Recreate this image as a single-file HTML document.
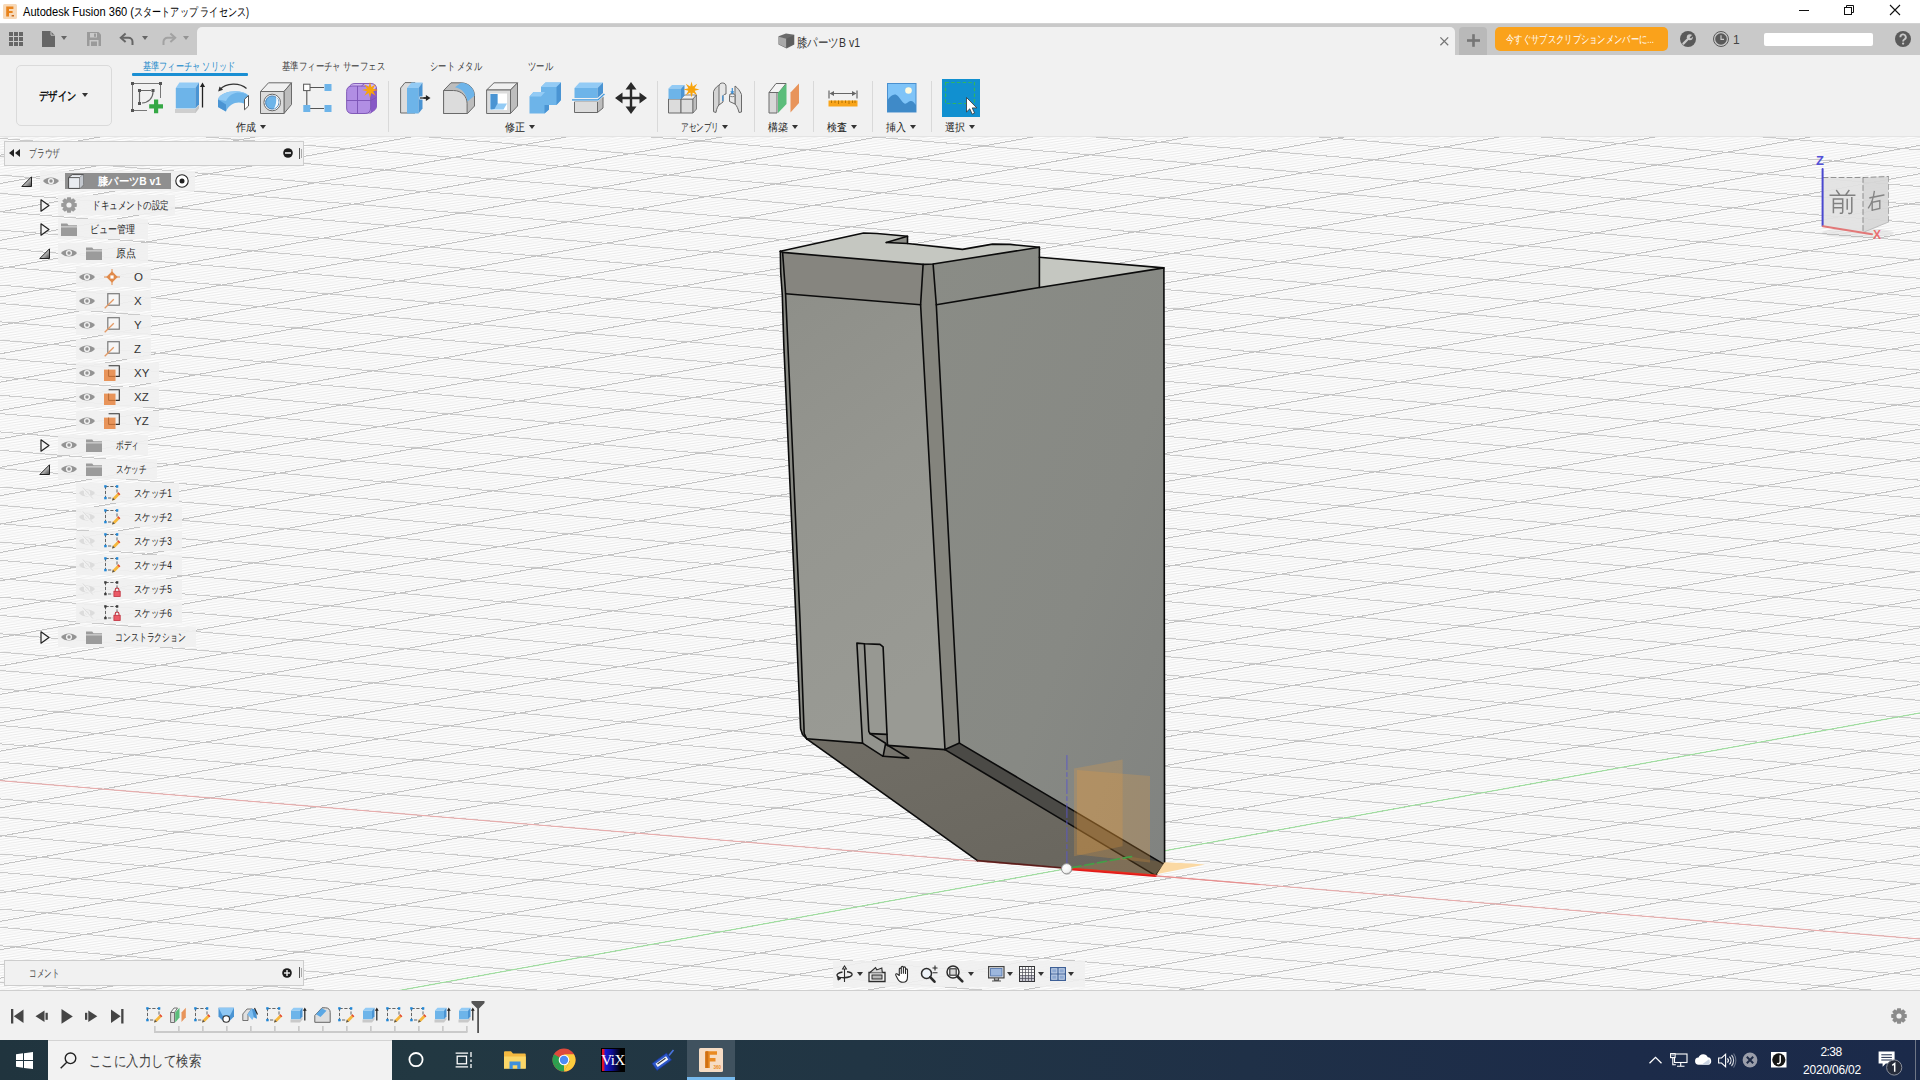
<!DOCTYPE html>
<html lang="ja"><head><meta charset="utf-8"><title>Autodesk Fusion 360</title>
<style>
*{box-sizing:border-box}
html,body{margin:0;padding:0}
body{width:1920px;height:1080px;overflow:hidden;position:relative;background:#fff;
 font-family:"Liberation Sans",sans-serif;font-size:12px;color:#333}
.a{position:absolute;white-space:nowrap}
.t{position:absolute;white-space:nowrap;line-height:1}
svg{position:absolute;overflow:visible}
#title{left:0;top:0;width:1920px;height:23px;background:#fff}
#qat{left:0;top:23px;width:1920px;height:32px;background:#c9c9c9;border-top:1px solid #d2d2d2}
#doctab{left:197px;top:27px;width:1258px;height:28px;background:#f1f1f1;border-radius:5px 5px 0 0}
#plus{left:1459px;top:27px;width:28px;height:28px;background:#b9b9b9;border-radius:4px 4px 0 0}
#sub{left:1495px;top:27px;width:173px;height:24px;background:#faa21b;border-radius:5px;color:#fff;
 font-size:12px;line-height:24px;padding-left:11px;overflow:hidden}
#ribbon{left:0;top:55px;width:1920px;height:82px;background:#f1f1f1;border-bottom:1px solid #e4e4e4}
#canvas{left:0;top:137px;width:1920px;height:854px;background:#fff;overflow:hidden}
#timeline{left:0;top:990px;width:1920px;height:50px;background:#f1f1f1;border-top:1px solid #cfcfcf}
#taskbar{left:0;top:1040px;width:1920px;height:40px;
 background:linear-gradient(90deg,#20343e 0%,#223842 22%,#213544 45%,#1f3047 65%,#1c2b49 85%,#1b2a4a 100%)}
.sep{position:absolute;top:81px;width:1px;height:51px;background:#d9d9d9}
.tab{position:absolute;top:60px;font-size:11px;line-height:12px;color:#3a3a3a;white-space:nowrap;letter-spacing:.4px}
.grp{position:absolute;top:121px;font-size:11px;line-height:12px;color:#222;white-space:nowrap}
.dd{position:absolute;width:0;height:0;border-left:3.5px solid transparent;border-right:3.5px solid transparent;border-top:4.5px solid #333}
.row{position:absolute;height:20px;background:rgba(240,240,240,.92)}
.lbl{position:absolute;font-size:11px;line-height:20px;color:#222;white-space:nowrap;letter-spacing:.3px}
</style></head>
<body>
<div id="title" class="a">
<svg style="left:3px;top:4px" width="14" height="15" viewBox="0 0 14 15"><rect x="0" y="0" width="14" height="15" rx="1.5" fill="#f7d9b8"/><path d="M3.2 12.5V2.6h7.2v2.3H6v2h3.6v2.2H6v3.4z" fill="#e8831c"/><path d="M8.6 11h2.4v1.5H8.6z" fill="#c9681a"/></svg>
<svg style="left:23px;top:3px" width="230" height="17"><text x="0" y="12.9" font-size="12" fill="#000"><tspan textLength="111" lengthAdjust="spacingAndGlyphs">Autodesk Fusion 360 (</tspan><tspan textLength="115" lengthAdjust="spacingAndGlyphs">スタートアップ ライセンス)</tspan></text></svg>
<svg style="left:1799px;top:10px" width="10" height="1"><rect width="10" height="1" y="0" fill="#111"/></svg>
<svg style="left:1844px;top:5px" width="10" height="10" viewBox="0 0 10 10" fill="none" stroke="#111" stroke-width="1"><rect x="0.5" y="2.5" width="7" height="7"/><path d="M2.5 2.5V0.5h7v7h-2"/></svg>
<svg style="left:1890px;top:5px" width="10" height="10" viewBox="0 0 10 10" stroke="#111" stroke-width="1.1"><path d="M0 0L10 10M10 0L0 10"/></svg>
</div>
<div id="qat" class="a"></div>
<svg style="left:9px;top:32px" width="14" height="14" fill="#666"><rect x="0" y="0" width="4" height="4"/><rect x="5" y="0" width="4" height="4"/><rect x="10" y="0" width="4" height="4"/><rect x="0" y="5" width="4" height="4"/><rect x="5" y="5" width="4" height="4"/><rect x="10" y="5" width="4" height="4"/><rect x="0" y="10" width="4" height="4"/><rect x="5" y="10" width="4" height="4"/><rect x="10" y="10" width="4" height="4"/></svg>
<svg style="left:42px;top:31px" width="13" height="16" fill="#666"><path d="M0 0h8.5L13 4.5V16H0z"/><path d="M9 0.3v3.9h3.8" fill="none" stroke="#c9c9c9" stroke-width="1"/></svg>
<div class="dd" style="left:61px;top:36px;border-top-color:#666"></div>
<svg style="left:87px;top:32px" width="14" height="14"><path d="M0 0h11.5L14 2.5V14H0z" fill="#9a9a9a"/><rect x="3" y="1" width="7" height="4.5" fill="#c9c9c9"/><rect x="7" y="1.6" width="2" height="3.2" fill="#9a9a9a"/><rect x="2.5" y="8" width="9" height="6" fill="#c9c9c9"/><rect x="4" y="9.5" width="6" height="4.5" fill="#9a9a9a"/></svg>
<svg style="left:120px;top:33px" width="14" height="13" viewBox="0 0 14 13" fill="none"><path d="M2.2 4.8h6.3a4 4 0 0 1 4 4V12" stroke="#666" stroke-width="2"/><path d="M5.6 0.6L0.8 4.8l4.8 4.2" stroke="#666" stroke-width="2" stroke-linejoin="miter"/></svg>
<div class="dd" style="left:142px;top:36px;border-top-color:#666"></div>
<svg style="left:162px;top:33px" width="14" height="13" viewBox="0 0 14 13" fill="none"><path d="M11.8 4.8H5.5a4 4 0 0 0-4 4V12" stroke="#a2a2a2" stroke-width="2"/><path d="M8.4 0.6l4.8 4.2-4.8 4.2" stroke="#a2a2a2" stroke-width="2"/></svg>
<div class="dd" style="left:183px;top:36px;border-top-color:#939393"></div>
<div id="doctab" class="a"></div>
<svg style="left:778px;top:33px" width="17" height="16" viewBox="0 0 17 16"><path d="M0.5 3.2L8 0.4l8.3 1.4v9.6L8.6 15.4 0.5 11.5z" fill="#6b6b6b"/><path d="M0.9 3.8l7.4 1.9v9L0.9 11.2z" fill="#a9a9a9"/><path d="M8.3 5.7l7.7-3.4v8.9l-7.7 3.5z" fill="#5e5e5e"/></svg>
<svg style="left:797px;top:32.5px" width="63" height="18"><text x="0" y="13.7" font-size="13" fill="#333" textLength="63" lengthAdjust="spacingAndGlyphs">膝パーツB v1</text></svg>
<svg style="left:1440px;top:37px" width="9" height="9" viewBox="0 0 9 9" stroke="#777" stroke-width="1.3"><path d="M0.4 0.4l7.8 7.8M8.2 0.4L0.4 8.2"/></svg>
<div id="plus" class="a"></div>
<svg style="left:1467px;top:34px" width="13" height="13" fill="#767676"><rect x="5.2" y="0.2" width="2.6" height="12.6"/><rect x="0" y="5.2" width="13" height="2.6"/></svg>
<div id="sub" class="a"></div>
<svg style="left:1506px;top:31.25px" width="148" height="15.5"><text x="0" y="11.5" font-size="10.5" fill="#fff" textLength="148" lengthAdjust="spacingAndGlyphs">今すぐサブスクリプションメンバーに...</text></svg>
<svg style="left:1680px;top:31px" width="16" height="16" viewBox="0 0 16 16"><circle cx="8" cy="8" r="8" fill="#5a5a5a"/><path d="M3.4 12.6l4.3-4.3" stroke="#c9c9c9" stroke-width="2.2" stroke-linecap="round"/><circle cx="9.8" cy="6.2" r="3" fill="#c9c9c9"/><path d="M9.6 6.4l3.2-3.2 1.2 1.2-3 3.2z" fill="#5a5a5a"/></svg>
<svg style="left:1713px;top:31px" width="16" height="16" viewBox="0 0 16 16"><circle cx="8" cy="8" r="7.5" fill="none" stroke="#5a5a5a" stroke-width="1"/><circle cx="8" cy="8" r="5.8" fill="#5a5a5a"/><path d="M8 4.2V8.4h3" stroke="#c9c9c9" stroke-width="1.2" fill="none"/></svg>
<div class="t" style="left:1733px;top:33px;font-size:12px;line-height:14px;color:#444">1</div>
<div class="a" style="left:1764px;top:33px;width:109px;height:13px;background:#fff;border-radius:2px"></div>
<svg style="left:1895px;top:31px" width="16" height="16" viewBox="0 0 16 16"><circle cx="8" cy="8" r="8" fill="#5a5a5a"/><path d="M5.4 6.2a2.7 2.7 0 1 1 3.9 2.3c-.9.5-1.2.9-1.2 1.9" stroke="#c9c9c9" stroke-width="1.9" fill="none"/><circle cx="8.1" cy="12.6" r="1.15" fill="#c9c9c9"/></svg>
<div id="ribbon" class="a"></div>
<div class="a" style="left:16px;top:65px;width:96px;height:61px;border:1px solid #dadada;border-radius:5px;background:#f1f1f1"></div>
<svg style="left:39px;top:86.5px" width="37" height="17"><text x="0" y="12.8" font-size="12" fill="#111" font-weight="bold" textLength="37" lengthAdjust="spacingAndGlyphs">デザイン</text></svg>
<div class="dd" style="left:82px;top:93px"></div>
<svg style="left:143px;top:58px" width="92" height="16"><text x="0" y="12" font-size="11" fill="#1687c9" textLength="92" lengthAdjust="spacingAndGlyphs">基準フィーチャ ソリッド</text></svg>
<div class="a" style="left:132px;top:73px;width:116px;height:3px;background:#1a8fd3;border-radius:1px"></div>
<svg style="left:281.5px;top:58px" width="103" height="16"><text x="0" y="12" font-size="11" fill="#3a3a3a" textLength="103" lengthAdjust="spacingAndGlyphs">基準フィーチャ サーフェス</text></svg>
<svg style="left:430px;top:58px" width="52" height="16"><text x="0" y="12" font-size="11" fill="#3a3a3a" textLength="52" lengthAdjust="spacingAndGlyphs">シート メタル</text></svg>
<svg style="left:527.5px;top:58px" width="25" height="16"><text x="0" y="12" font-size="11" fill="#3a3a3a" textLength="25" lengthAdjust="spacingAndGlyphs">ツール</text></svg>
<svg style="left:131px;top:82px" width="32" height="32" viewBox="0 0 32 32"><path d="M1.5 1.5h28v27h-28z" fill="none" stroke="#777" stroke-width="1"/><g fill="#555"><rect x="0" y="0" width="3" height="3"/><rect x="28" y="0" width="3" height="3"/><rect x="0" y="27" width="3" height="3"/></g><rect x="16" y="16" width="16" height="16" fill="#f1f1f1"/><path d="M10 8.5h10M8.5 10v10" stroke="#666" stroke-width="1.2" fill="none"/><path d="M22 10c0 6-4.5 10.5-11 11" stroke="#666" stroke-width="1.2" fill="none"/><g fill="#555"><rect x="7" y="7" width="3" height="3"/><rect x="20.5" y="7" width="3" height="3"/><rect x="7" y="20" width="3" height="3"/></g><path d="M23 17.5h4.2v13.8H23z M18.2 22.3H32v4.2H18.2z" fill="#35a845"/></svg>
<svg style="left:174px;top:82px" width="32" height="32" viewBox="0 0 32 32"><path d="M1 27h20.5l3.5-4.2v3.6L21.5 31H1z" fill="#c4c4c4"/><path d="M1 27h20.5v4H1z" fill="#cfcfcf"/><path d="M1.8 6h19.6v20.4H1.8z" fill="#6db4e9"/><path d="M1.8 6L5.4 0.6H25L21.4 6z" fill="#93cbf5"/><path d="M21.4 6L25 0.6v21.6l-3.6 4.2z" fill="#4a94d3"/><path d="M28.5 3v22.5" stroke="#222" stroke-width="1.3"/><path d="M28.5 0.5l2.6 4.6h-5.2z" fill="#222"/></svg>
<svg style="left:217px;top:82px" width="32" height="32" viewBox="0 0 32 32"><path d="M1 17.5C3 9 24 6 31.5 13.5V24c-7-5.5-18-5-22.5 5.5L1 25z" fill="#6db4e9"/><path d="M1 17.5C3 9 24 6 31.5 13.5c-7-5-18-4-22.5 5.5z" fill="#93cbf5"/><path d="M1 17.5l8 5V29.5L1 25z" fill="#4a94d3"/><path d="M27.5 17.2l4-3.7V24l-4 3.8z" fill="#fff" stroke="#555" stroke-width="1"/><path d="M3 7.5C9 0.5 23 0.5 29.5 6.5" stroke="#333" stroke-width="1.2" fill="none"/><path d="M1.2 9.5l1.3-5 3.6 3.2z" fill="#333"/></svg>
<svg style="left:260px;top:82px" width="32" height="32" viewBox="0 0 32 32"><path d="M0.5 9.5L8.5 0.8H31.5L24 9.5z" fill="#f0f0f0" stroke="#6a6a6a" stroke-width="1"/><path d="M24 9.5l7.5-8.7V22.5L24 31.5z" fill="#bdbdbd" stroke="#6a6a6a" stroke-width="1"/><path d="M0.5 9.5H24V31.5H0.5z" fill="#dcdcdc" stroke="#6a6a6a" stroke-width="1"/><circle cx="12.2" cy="20.5" r="8.3" fill="#fff" stroke="#666" stroke-width="1"/><circle cx="12.2" cy="20.5" r="6.6" fill="#6db4e9" stroke="#4a80b4" stroke-width="1"/><path d="M16 14.8c4 3.2 3.5 9.7-2.3 12.2 2.3-3.3 3-7.7 2.3-12.2z" fill="#f7fafd"/></svg>
<svg style="left:303px;top:82px" width="32" height="32" viewBox="0 0 32 32"><path d="M7 5.5h14M3.8 9v14M7 26.5h14" stroke="#555" stroke-width="1.1" fill="none"/><rect x="0.6" y="2.2" width="6.4" height="6.4" fill="#fff" stroke="#555" stroke-width="1"/><rect x="21.5" y="2" width="7" height="7" fill="#6db4e9"/><rect x="0.3" y="23" width="7" height="7" fill="#6db4e9"/><rect x="21.5" y="23" width="7" height="7" fill="#6db4e9"/></svg>
<svg style="left:346px;top:82px" width="32" height="32" viewBox="0 0 32 32"><path d="M3 5.5C4 2.8 6 1.5 9 1.5H25c3 0 5 1.5 5.5 4.5V24c0 2-1 3.5-2.5 4.5L24.5 31H5.5l-2.5-5z" fill="#d2bbf2" stroke="#7b52b3" stroke-width="0.9"/><path d="M24.5 9.5c2.5-1.5 4.5-3 6-3.5V24c0 2-1 3.5-2.5 4.5l-3.5 2.5z" fill="#8758c6"/><path d="M0.6 9.5c0-3.5 2-5.5 5.5-5.5h13c3.5 0 5.5 2 5.5 5.5V26c0 3.5-2 5.5-5.5 5.5H6.1c-3.5 0-5.5-2-5.5-5.5z" fill="#b18ee4" stroke="#7b52b3" stroke-width="0.9"/><path d="M11.5 4V31.5M0.6 18.5h24M24.6 18.5l5.9-3M18.5 1.5l-3 2.5" stroke="#7b52b3" stroke-width="0.9" fill="none"/><polygon points="24,0 25.3,4.9 29.7,2.3 27.1,6.7 32,8 27.1,9.3 29.7,13.7 25.3,11.1 24,16 22.7,11.1 18.3,13.7 20.9,9.3 16,8 20.9,6.7 18.3,2.3 22.7,4.9" fill="#f7a30c"/></svg>
<svg style="left:400px;top:82px" width="32" height="32" viewBox="0 0 32 32"><path d="M0.6 6L5 0.6h10V31H0.6z" fill="#dcdcdc" stroke="#6a6a6a" stroke-width="1"/><path d="M7 6L11.5 0.6h11L18.5 6z" fill="#93cbf5"/><path d="M7 6h11.5v25.5H7z" fill="#6db4e9"/><path d="M18.5 6l4-5.4v25.9l-4 5z" fill="#4a94d3"/><path d="M20 16h7" stroke="#222" stroke-width="1.5"/><path d="M30.5 16l-4.6 3v-6z" fill="#222"/><rect x="19.5" y="14.5" width="4" height="3" fill="#fff"/><path d="M20 16h7" stroke="#222" stroke-width="1.3"/></svg>
<svg style="left:443px;top:82px" width="32" height="32" viewBox="0 0 32 32"><path d="M0.6 8.5L8 0.8h10c8 0 13.5 6 13.5 13V24l-7 7.5H0.6z" fill="#bdbdbd" stroke="#6a6a6a" stroke-width="1"/><path d="M0.6 8.5h10c8 0 13.5 6 13.5 13v10H0.6z" fill="#dcdcdc" stroke="#6a6a6a" stroke-width="1"/><path d="M12 5.2L18 0.8c8 0 13.5 6 13.5 13l-7 5.7c-1-7.5-5.5-13-12.5-14.3z" fill="#6db4e9"/></svg>
<svg style="left:486px;top:82px" width="32" height="32" viewBox="0 0 32 32"><path d="M0.6 8L8 0.8H31.5L24.5 8z" fill="#f0f0f0" stroke="#6a6a6a" stroke-width="1"/><path d="M24.5 8l7-7.2V24l-7 7.5z" fill="#bdbdbd" stroke="#6a6a6a" stroke-width="1"/><path d="M0.6 8H24.5V31.5H0.6z" fill="#dcdcdc" stroke="#6a6a6a" stroke-width="1"/><path d="M4 11.5H21V28H4z" fill="#fff"/><path d="M4.5 12h7v9.5h9.5l-3.5 6H4.5z" fill="#93cbf5"/><path d="M4.5 12h7v9.5l-3 5.5-4 0.5z" fill="#4a94d3"/></svg>
<svg style="left:529px;top:82px" width="32" height="32" viewBox="0 0 32 32"><path d="M0.5 14.5L4.5 10H12V5L16.5 0.5H32v17.5L27.5 23H20v4.5l-4.5 4H0.5z" fill="#6db4e9"/><path d="M0.5 14.5L4.5 10H16l-4 4.5z M12 5L16.5 0.5H32L27.5 5z" fill="#93cbf5"/><path d="M27.5 5L32 0.5v17.5L27.5 23z M15.5 23h4.5v4.5l-4.5 4z" fill="#4a94d3"/></svg>
<svg style="left:572px;top:82px" width="32" height="32" viewBox="0 0 32 32"><path d="M2.5 19.5h23v11h-23z" fill="#dcdcdc" stroke="#6a6a6a" stroke-width="1"/><path d="M25.5 19.5l5.5-5V26l-5.5 4.5z" fill="#bdbdbd" stroke="#6a6a6a" stroke-width="1"/><path d="M2.5 6L7.5 0.6H31L25.5 6z" fill="#93cbf5"/><path d="M2.5 6h23v10h-23z" fill="#6db4e9"/><path d="M25.5 6L31 0.6V11l-5.5 5z" fill="#4a94d3"/><path d="M0 18h26l6.5-6" stroke="#3f97dc" stroke-width="1.6" fill="none"/><path d="M0 19.2h26l6.5-6" stroke="#fff" stroke-width="0.8" fill="none"/></svg>
<svg style="left:615px;top:82px" width="32" height="32" viewBox="0 0 32 32"><path d="M16 3v26M3 16h26" stroke="#2a2a2a" stroke-width="2.4"/><path d="M16 0l5.5 7.5h-11z M16 32l5.5-7.5h-11z M0 16l7.5-5.5v11z M32 16l-7.5-5.5v11z" fill="#2a2a2a"/></svg>
<svg style="left:668px;top:82px" width="32" height="32" viewBox="0 0 32 32"><path d="M0.5 17h12.5v14H0.5z" fill="#dcdcdc" stroke="#6a6a6a" stroke-width="1"/><path d="M13 17h12v14H13z" fill="#dcdcdc" stroke="#6a6a6a" stroke-width="1"/><path d="M13 17l3.5-4H28.5L25 17z" fill="#f0f0f0" stroke="#6a6a6a" stroke-width="0.8"/><path d="M25 17l3.5-4V27L25 31z" fill="#bdbdbd" stroke="#6a6a6a" stroke-width="0.8"/><path d="M0.5 6.5L4 3H16.5L13 6.5z" fill="#93cbf5"/><path d="M0.5 6.5H13V17H0.5z" fill="#6db4e9"/><path d="M13 6.5L16.5 3v10.5L13 17z" fill="#4a94d3"/><polygon points="23.5,-0.5 24.8,4.4 29.2,1.8 26.6,6.2 31.5,7.5 26.6,8.8 29.2,13.2 24.8,10.6 23.5,15.5 22.2,10.6 17.8,13.2 20.4,8.8 15.5,7.5 20.4,6.2 17.8,1.8 22.2,4.4" fill="#f7a30c"/></svg>
<svg style="left:712px;top:82px" width="32" height="32" viewBox="0 0 32 32"><path d="M1.5 9.5C3 6 5.5 3.5 8.5 2.5V21c-2.5 2.5-4 5.5-4.5 9.5l-2.5-0.8z" fill="#d4d4d4" stroke="#6a6a6a" stroke-width="1"/><path d="M7 4.2C7 2.2 8.5 1 10.5 1S14 2.2 14 4.2V12c-1.8 0.3-3 1-3 2.5V20L7 23z" fill="#e6e6e6" stroke="#6a6a6a" stroke-width="1"/><path d="M23 4c3 2 5 5 6.5 8.5V30l-2.5 0.5c-0.8-3.5-2-6.5-4-8.5z" fill="#dadada" stroke="#6a6a6a" stroke-width="1"/><path d="M17.5 13.5c0-1.3 1.2-2 2.8-2s2.7 0.7 2.7 2V22l-5.5-2.5z" fill="#e8e8e8" stroke="#6a6a6a" stroke-width="1"/><ellipse cx="20.3" cy="13.3" rx="2.6" ry="1.4" fill="#f4f4f4" stroke="#6a6a6a" stroke-width="0.8"/><path d="M10.8 13.5v5.5M20.3 6v5" stroke="#3f8fd4" stroke-width="1.2"/><path d="M20.3 12.5l-2-3.2h4z" fill="#3f8fd4"/></svg>
<svg style="left:768px;top:82px" width="32" height="32" viewBox="0 0 32 32"><path d="M1 10.5L8 1.5h10L11 10.5z" fill="#f4f4f4" stroke="#6a6a6a" stroke-width="1"/><path d="M1 10.5h8v20.5H1z" fill="#d8d8d8" stroke="#6a6a6a" stroke-width="1"/><path d="M10 10.5L18.5 1.5V22L10 31z" fill="#5bbd7b"/><path d="M22.5 10.5L31 1.5V21L22.5 30.5z" fill="#e8945a"/></svg>
<svg style="left:827px;top:82px" width="32" height="32" viewBox="0 0 32 32"><path d="M2 8.5v8M30 8.5v8M4 11.5h24" stroke="#666" stroke-width="1.2" fill="none"/><path d="M2.5 11.5l4.5-2.5v5z M29.5 11.5l-4.5-2.5v5z" fill="#666"/><rect x="1.5" y="18.5" width="29" height="6" fill="#f9a51a"/><path d="M4.5 18.5v2.5M8 18.5v2.5M11.5 18.5v3.5M15 18.5v2.5M18.5 18.5v2.5M22 18.5v3.5M25.5 18.5v2.5M28 18.5v2.5" stroke="#b06f00" stroke-width="0.9"/></svg>
<svg style="left:886px;top:82px" width="32" height="32" viewBox="0 0 32 32"><rect x="1.5" y="1.5" width="28.5" height="28.5" fill="#7fc4f8" stroke="#4a90cf" stroke-width="1"/><path d="M1.5 18c3-4 6-6.5 9-5 3 1.5 5 7 8 8.5 2 1 3.5-2 6-2.5 2-0.4 4 2 5.5 4V30H1.5z" fill="#3f8ac8"/><circle cx="22.5" cy="8.5" r="3.3" fill="#fffbe0"/></svg>
<svg style="left:942px;top:79px" width="38" height="38" viewBox="0 0 38 38"><rect width="38" height="38" fill="#1190d0"/><path d="M3.5 3.5h29v21h-29z" fill="none" stroke="#2fb463" stroke-width="1.2" stroke-dasharray="3.5 2.2"/><path d="M24.5 18.5v14.5l3.3-3.2 2.4 5.4 2.4-1.1-2.4-5.2h4.6z" fill="#fff" stroke="#333" stroke-width="0.8"/></svg>
<div class="sep" style="left:388px"></div>
<div class="sep" style="left:657px"></div>
<div class="sep" style="left:754px"></div>
<div class="sep" style="left:813px"></div>
<div class="sep" style="left:872px"></div>
<div class="sep" style="left:931px"></div>
<svg style="left:236px;top:119px" width="20" height="16"><text x="0" y="12" font-size="11" fill="#222" textLength="20" lengthAdjust="spacingAndGlyphs">作成</text></svg>
<div class="dd" style="left:260px;top:125px"></div>
<svg style="left:505px;top:119px" width="20" height="16"><text x="0" y="12" font-size="11" fill="#222" textLength="20" lengthAdjust="spacingAndGlyphs">修正</text></svg>
<div class="dd" style="left:529px;top:125px"></div>
<svg style="left:680.5px;top:119px" width="38" height="16"><text x="0" y="12" font-size="11" fill="#222" textLength="38" lengthAdjust="spacingAndGlyphs">アセンブリ</text></svg>
<div class="dd" style="left:722px;top:125px"></div>
<svg style="left:768px;top:119px" width="20" height="16"><text x="0" y="12" font-size="11" fill="#222" textLength="20" lengthAdjust="spacingAndGlyphs">構築</text></svg>
<div class="dd" style="left:792px;top:125px"></div>
<svg style="left:826.5px;top:119px" width="20" height="16"><text x="0" y="12" font-size="11" fill="#222" textLength="20" lengthAdjust="spacingAndGlyphs">検査</text></svg>
<div class="dd" style="left:851px;top:125px"></div>
<svg style="left:885.5px;top:119px" width="20" height="16"><text x="0" y="12" font-size="11" fill="#222" textLength="20" lengthAdjust="spacingAndGlyphs">挿入</text></svg>
<div class="dd" style="left:910px;top:125px"></div>
<svg style="left:944.5px;top:119px" width="20" height="16"><text x="0" y="12" font-size="11" fill="#222" textLength="20" lengthAdjust="spacingAndGlyphs">選択</text></svg>
<div class="dd" style="left:969px;top:125px"></div>
<div id="canvas" class="a"><svg style="left:0;top:0" width="1920" height="854" viewBox="0 0 1920 854">
<defs>
<pattern id="gA" width="40" height="28.38" patternUnits="userSpaceOnUse" patternTransform="skewY(-10.3427) translate(0 18.168)"><rect x="0" y="-0.5" width="40" height="1" fill="#c6c6c6"/><rect x="0" y="27.88" width="40" height="1" fill="#c6c6c6"/></pattern>
<pattern id="gB" width="40" height="18.35" patternUnits="userSpaceOnUse" patternTransform="skewY(4.7162) translate(0 1.322)"><rect x="0" y="-0.5" width="40" height="1" fill="#cccccc"/><rect x="0" y="17.85" width="40" height="1" fill="#cccccc"/></pattern>
<pattern id="mA" width="40" height="2.838" patternUnits="userSpaceOnUse" patternTransform="skewY(-10.3427) translate(0 1.14)"><rect x="0" y="0" width="40" height="0.9" fill="#000" fill-opacity="0.05"/></pattern>
<pattern id="mB" width="40" height="1.835" patternUnits="userSpaceOnUse" patternTransform="skewY(4.7162) translate(0 1.322)"><rect x="0" y="0" width="40" height="0.7" fill="#000" fill-opacity="0.045"/></pattern>
<linearGradient id="fL" x1="0" y1="0" x2="0.25" y2="1"><stop offset="0" stop-color="#8e8f89"/><stop offset="0.5" stop-color="#959690"/><stop offset="1" stop-color="#999a94"/></linearGradient>
<linearGradient id="fR" x1="0" y1="0" x2="1" y2="1"><stop offset="0" stop-color="#8a8c86"/><stop offset="0.6" stop-color="#878984"/><stop offset="1" stop-color="#818380"/></linearGradient>
<linearGradient id="fB" x1="0" y1="0" x2="1" y2="1"><stop offset="0" stop-color="#716e66"/><stop offset="1" stop-color="#68655d"/></linearGradient>
<radialGradient id="ball" cx="0.4" cy="0.35" r="0.7"><stop offset="0" stop-color="#fff"/><stop offset="0.7" stop-color="#f2f2f2"/><stop offset="1" stop-color="#b0b0b0"/></radialGradient>
</defs>
<rect width="1920" height="854" fill="url(#mA)"/><rect width="1920" height="854" fill="url(#mB)"/>
<g shape-rendering="crispEdges" stroke-width="1" fill="none"><path d="M0 -145.48L1920 12.92M0 -127.13L1920 31.27M0 -108.78L1920 49.62M0 -90.43L1920 67.97M0 -72.08L1920 86.32M0 -53.73L1920 104.67M0 -35.38L1920 123.02M0 -17.03L1920 141.37M0 1.32L1920 159.72M0 19.67L1920 178.07M0 38.02L1920 196.42M0 56.37L1920 214.77M0 74.72L1920 233.12M0 93.07L1920 251.47M0 111.42L1920 269.82M0 129.77L1920 288.17M0 148.12L1920 306.52M0 166.47L1920 324.87M0 184.82L1920 343.22M0 203.17L1920 361.57M0 221.52L1920 379.92M0 239.87L1920 398.27M0 258.22L1920 416.62M0 276.57L1920 434.97M0 294.92L1920 453.32M0 313.27L1920 471.67M0 331.62L1920 490.02M0 349.97L1920 508.37M0 368.32L1920 526.72M0 386.67L1920 545.07M0 405.02L1920 563.42M0 423.37L1920 581.77M0 441.72L1920 600.12M0 460.07L1920 618.47M0 478.42L1920 636.82M0 496.77L1920 655.17M0 515.12L1920 673.52M0 533.47L1920 691.87M0 551.82L1920 710.22M0 570.17L1920 728.57M0 588.52L1920 746.92M0 606.87L1920 765.27M0 625.22L1920 783.62M0 643.57L1920 801.97M0 661.92L1920 820.32M0 680.27L1920 838.67M0 698.62L1920 857.02M0 716.97L1920 875.37M0 735.32L1920 893.72M0 753.67L1920 912.07M0 772.02L1920 930.42M0 790.37L1920 948.77M0 808.72L1920 967.12M0 827.07L1920 985.47M0 845.42L1920 1003.82" stroke="#cacaca"/><path d="M0 18.17L1920 -332.23M0 46.55L1920 -303.85M0 74.93L1920 -275.47M0 103.31L1920 -247.09M0 131.69L1920 -218.71M0 160.07L1920 -190.33M0 188.45L1920 -161.95M0 216.83L1920 -133.57M0 245.21L1920 -105.19M0 273.59L1920 -76.81M0 301.97L1920 -48.43M0 330.35L1920 -20.05M0 358.73L1920 8.33M0 387.11L1920 36.71M0 415.49L1920 65.09M0 443.87L1920 93.47M0 472.25L1920 121.85M0 500.63L1920 150.23M0 529.01L1920 178.61M0 557.39L1920 206.99M0 585.77L1920 235.37M0 614.15L1920 263.75M0 642.53L1920 292.13M0 670.91L1920 320.51M0 699.29L1920 348.89M0 727.67L1920 377.27M0 756.05L1920 405.65M0 784.43L1920 434.03M0 812.81L1920 462.41M0 841.19L1920 490.79M0 869.57L1920 519.17M0 897.95L1920 547.55M0 926.33L1920 575.93M0 954.71L1920 604.31M0 983.09L1920 632.69M0 1011.47L1920 661.07M0 1039.85L1920 689.45M0 1068.23L1920 717.83M0 1096.61L1920 746.21M0 1124.99L1920 774.59M0 1153.37L1920 802.97M0 1181.75L1920 831.35" stroke="#c3c3c3"/></g>
<polyline points="0,643.6 1920,802" fill="none" stroke="#ecaaaa" stroke-width="1" stroke-linejoin="round" stroke-linecap="round"/>
<polyline points="0,926.3 1920,575.9" fill="none" stroke="#9be49b" stroke-width="1" stroke-linejoin="round" stroke-linecap="round"/>
<polygon points="780.3,114.3 780.7,135.5 782.3,158 783.8,208 796,483 800.6,591.8 802.5,597.5 806.7,601.8 806.7,601.8 804.2,596.5 800,483 785.6,156.8 782.6,115.4" fill="#898a84"/>
<polygon points="782.6,115.4 923.1,127.4 920.6,167.8 785.6,156.8" fill="#86857f"/>
<polygon points="785.6,156.8 920.6,167.8 945,612.6 887.5,608.4 862.5,606.1 806.7,601.8 804.2,596.5 800,483" fill="url(#fL)"/>
<polygon points="923.1,127.4 933.1,127 936.3,167.8 959.4,606.1 945,612.6 920.6,167.8" fill="#84847d"/>
<polygon points="933.1,127 1039.4,110.3 1039.4,150.5 1163.9,130.9 1164.6,727.6 959.4,606.1 936.3,167.8" fill="url(#fR)"/>
<polygon points="780.3,114.3 863.6,96 877,96.5 907.5,99.3 907.5,106.5 962.5,112.4 992.5,107.1 1010,107.4 1039.4,110.3 933.1,127 923.1,127.4 782.6,115.4" fill="#c5c7c1"/>
<polygon points="886.3,105.5 907.5,99.3 907.5,106.5" fill="#8b8c86"/>
<polygon points="1039.4,120.2 1163.9,130.9 1039.4,150.5" fill="#c5c7c1"/>
<polygon points="806.7,601.8 862.5,606.1 887.5,608.4 945,612.6 1155.6,738.6 977.5,723.6" fill="url(#fB)"/>
<polygon points="959.4,606.1 1164.6,727.6 1164.4,729 1155.6,738.6 945,612.6" fill="#4b4a46"/>
<polygon points="856.9,506.1 864.4,506.8 868.8,594.3 870,596.6 885.6,606.3 883.1,619.3 862.5,606.1" fill="#93948e"/>
<polygon points="864.4,506.8 880,507.4 883.1,509.9 886.9,597.4 870,596.6 868.8,594.3" fill="#979892"/>
<polygon points="870,596.6 886.9,597.4 887.5,608.4 885.6,606.3" fill="#7d7c76"/>
<polygon points="885.6,607 908.8,621.1 883.1,619.3" fill="#76746d"/>
<polyline points="780.3,114.3 780.7,135.5 782.3,158 783.8,208 796,483 800.6,591.8 802.5,597.5 806.7,601.8" fill="none" stroke="#0b0b0b" stroke-width="1.6" stroke-linejoin="round" stroke-linecap="round"/>
<polyline points="782.6,115.4 785.6,156.8 800,483 804.2,596.5 806.7,601.8" fill="none" stroke="#0b0b0b" stroke-width="1.6" stroke-linejoin="round" stroke-linecap="round"/>
<polyline points="780.3,114.3 863.6,96 877,96.5 907.5,99.3 907.5,106.5 962.5,112.4 992.5,107.1 1010,107.4 1039.4,110.3 1039.4,150.5" fill="none" stroke="#0b0b0b" stroke-width="1.6" stroke-linejoin="round" stroke-linecap="round"/>
<polyline points="886.3,105.5 907.5,99.3" fill="none" stroke="#0b0b0b" stroke-width="1.6" stroke-linejoin="round" stroke-linecap="round"/>
<polyline points="886.3,105.5 907.5,106.5" fill="none" stroke="#0b0b0b" stroke-width="1.6" stroke-linejoin="round" stroke-linecap="round"/>
<polyline points="780.3,114.3 782.6,115.4 923.1,127.4 933.1,127 1039.4,110.3" fill="none" stroke="#0b0b0b" stroke-width="1.6" stroke-linejoin="round" stroke-linecap="round"/>
<polyline points="785.6,156.8 920.6,167.8" fill="none" stroke="#0b0b0b" stroke-width="1.6" stroke-linejoin="round" stroke-linecap="round"/>
<polyline points="923.1,127.4 920.6,167.8 945,612.6" fill="none" stroke="#0b0b0b" stroke-width="1.6" stroke-linejoin="round" stroke-linecap="round"/>
<polyline points="933.1,127 936.3,167.8 959.4,606.1" fill="none" stroke="#0b0b0b" stroke-width="1.6" stroke-linejoin="round" stroke-linecap="round"/>
<polyline points="936.3,167.8 1039.4,150.5 1163.9,130.9" fill="none" stroke="#0b0b0b" stroke-width="1.6" stroke-linejoin="round" stroke-linecap="round"/>
<polyline points="1039.4,120.2 1163.9,130.9 1164.6,727.6 1155.6,738.6" fill="none" stroke="#0b0b0b" stroke-width="1.6" stroke-linejoin="round" stroke-linecap="round"/>
<polyline points="806.7,601.8 862.5,606.1" fill="none" stroke="#0b0b0b" stroke-width="1.6" stroke-linejoin="round" stroke-linecap="round"/>
<polyline points="887.5,608.4 945,612.6 959.4,606.1 1164.6,727.6" fill="none" stroke="#0b0b0b" stroke-width="1.6" stroke-linejoin="round" stroke-linecap="round"/>
<polyline points="945,612.6 1155.6,738.6" fill="none" stroke="#0b0b0b" stroke-width="1.6" stroke-linejoin="round" stroke-linecap="round"/>
<polyline points="806.7,601.8 977.5,723.6" fill="none" stroke="#0b0b0b" stroke-width="1.6" stroke-linejoin="round" stroke-linecap="round"/>
<polyline points="862.5,606.1 856.9,506.1 864.4,506.8 880,507.4 883.1,509.9 887.5,608.4" fill="none" stroke="#0b0b0b" stroke-width="1.6" stroke-linejoin="round" stroke-linecap="round"/>
<polyline points="864.4,506.8 868.8,594.3 870,596.6 885.6,606.3 883.1,619.3 862.5,606.1" fill="none" stroke="#0b0b0b" stroke-width="1.6" stroke-linejoin="round" stroke-linecap="round"/>
<polyline points="870,596.6 886.9,597.4" fill="none" stroke="#0b0b0b" stroke-width="1.6" stroke-linejoin="round" stroke-linecap="round"/>
<polyline points="885.6,607 908.8,621.1 883.1,619.3" fill="none" stroke="#0b0b0b" stroke-width="1.6" stroke-linejoin="round" stroke-linecap="round"/>
<polyline points="977.5,723.6 1067,731.3" fill="none" stroke="#5a1f1c" stroke-width="1.6" stroke-linejoin="round" stroke-linecap="round"/>
<polyline points="1067,731.6 1155.6,738.8" fill="none" stroke="#e31a1a" stroke-width="2.6" stroke-linejoin="round" stroke-linecap="round"/>
<polygon points="1164.6,725.2 1191,726.6 1205,727.6 1160,736.6 1156.5,737.8" fill="#fbd9a3"/>
<polyline points="1156,738.9 1260,747.5" fill="none" stroke="#e88f8f" stroke-width="1.1" stroke-linejoin="round" stroke-linecap="round"/>
<polygon points="1074,631.6 1122.6,622.6 1122.6,709.3 1074,719.2" fill="#eea03c" fill-opacity="0.24"/>
<polygon points="1077,633 1150,639 1150,725.4 1077,717.4" fill="#eea03c" fill-opacity="0.24"/>
<polygon points="1067,731.6 1131,719.8 1164.4,725.4 1156,738.6" fill="#f2a23a" fill-opacity="0.16"/>
<polyline points="1066.9,618.5 1066.9,727" fill="none" stroke="#5a58c8" stroke-width="1.1" stroke-linejoin="round" stroke-linecap="round" stroke-dasharray="14 3 4 3" stroke-opacity="0.8"/>
<polyline points="1072,730.6 1131.5,719.6" fill="none" stroke="#43a047" stroke-width="1.7" stroke-linejoin="round" stroke-linecap="round" stroke-dasharray="9 4"/>
<circle cx="1066.7" cy="731.8" r="5.2" fill="url(#ball)" stroke="#8c8c8c" stroke-width="1"/>
<ellipse cx="1858" cy="96" rx="36" ry="5" fill="#000" fill-opacity="0.06"/>
<polygon points="1823,40.5 1863,40.5 1863,95.5 1823,89.3" fill="#e2e2e2" fill-opacity="0.93"/>
<polygon points="1863,40.5 1888.5,39.5 1888.5,85 1863,95.5" fill="#d6d6d6" fill-opacity="0.93"/>
<polyline points="1823,40.5 1863,40.5 1888.5,39.5" fill="none" stroke="#7a7a7a" stroke-width="0.8" stroke-linejoin="round" stroke-linecap="round" stroke-dasharray="5 3"/>
<polyline points="1863,40.5 1863,95.5" fill="none" stroke="#7a7a7a" stroke-width="0.8" stroke-linejoin="round" stroke-linecap="round" stroke-dasharray="5 3"/>
<polyline points="1888.5,39.5 1888.5,85" fill="none" stroke="#9a9a9a" stroke-width="0.8" stroke-linejoin="round" stroke-linecap="round" stroke-dasharray="5 3"/>
<polyline points="1863,95.5 1888.5,85" fill="none" stroke="#bdbdbd" stroke-width="1" stroke-linejoin="round" stroke-linecap="round"/>
<g transform="translate(1830 53)" fill="none" stroke="#808080" stroke-width="1.5" stroke-linecap="square"><title>前</title><path d="M6.7 0.6L9.3 4.3M18.9 0.6L16.2 4.3M0.3 5.2H24.7M3.4 22.5V9H12.7V21.8c0 1.2-0.6 1.6-2.2 1.5M3.4 13.4H12.7M3.4 17.8H12.7M17.2 9.5V19M21.8 7.8V21.6c0 1.5-0.7 2-2.8 1.8"/></g>
<g transform="translate(1868 53)" fill="none" stroke="#858585" stroke-width="1.4" stroke-linecap="square"><title>右</title><path d="M2 7.8L15.8 5M6.3 1.5C5.5 8 3.5 13.5 0.5 17.8M4.2 20.2V12.3L11.8 10.7V18.5L4.2 20.2"/></g>
<polyline points="1822.6,32 1822.6,89" fill="none" stroke="#4a48cf" stroke-width="2" stroke-linejoin="round" stroke-linecap="round"/>
<polyline points="1823,89.3 1872,97.2" fill="none" stroke="#e27878" stroke-width="2" stroke-linejoin="round" stroke-linecap="round"/>
</svg></div>
<div class="a" style="left:4px;top:141px;width:300px;height:25px;background:#f1f1f1;border:1px solid #cdcdcd"></div>
<svg style="left:9px;top:149px" width="11" height="8" viewBox="0 0 11 8"><path d="M5 0v8L0 4z M11 0v8L6 4z" fill="#222"/></svg>
<svg style="left:29px;top:144.5px" width="31" height="16"><text x="0" y="12" font-size="11" fill="#444" textLength="31" lengthAdjust="spacingAndGlyphs">ブラウザ</text></svg>
<svg style="left:283px;top:148px" width="10" height="10" viewBox="0 0 10 10"><circle cx="5" cy="5" r="4.8" fill="#1c1c1c"/><rect x="2" y="4.2" width="6" height="1.6" fill="#f1f1f1"/></svg>
<div class="a" style="left:299px;top:148px;width:1px;height:11px;background:#555"></div><div class="a" style="left:301px;top:149px;width:1px;height:9px;background:#aaa"></div>
<svg style="left:21px;top:176px" width="11" height="11" viewBox="0 0 11 11"><defs><linearGradient id="eg21_181" x1="0" y1="0" x2="1" y2="1"><stop offset="0.35" stop-color="#e8e8e8"/><stop offset="1" stop-color="#444"/></linearGradient></defs><path d="M10.5 0.8V10.5H0.8z" fill="url(#eg21_181)" stroke="#222" stroke-width="1" stroke-linejoin="round"/></svg>
<div class="row" style="left:40px;top:171px;width:155px"></div>
<svg style="left:43px;top:176px" width="16" height="10" viewBox="0 0 16 10"><path d="M0 5C3.2 0.3 12.8 0.3 16 5 12.8 9.7 3.2 9.7 0 5z" fill="#939393"/><circle cx="8" cy="5" r="3.1" fill="#f1f1f1"/><circle cx="8" cy="5" r="1.7" fill="#939393"/></svg>
<div class="a" style="left:65px;top:173px;width:106px;height:16px;background:#8f8f8f"></div>
<svg style="left:68px;top:174px" width="16" height="15" viewBox="0 0 16 15"><path d="M0.6 3.6L4.2 0.6h11.2v10.2L11.8 14.4H0.6z" fill="#e9ecf0" stroke="#4a4a4a" stroke-width="1"/><path d="M0.6 3.6h11.2v10.8M11.8 3.6l3.6-3" fill="none" stroke="#4a4a4a" stroke-width="0.9"/><path d="M11.8 3.6l3.6-3v10.2l-3.6 3.6z" fill="#c4c8ce"/></svg>
<svg style="left:97.5px;top:173px" width="63" height="16"><text x="0" y="12" font-size="11" fill="#fff" font-weight="bold" textLength="63" lengthAdjust="spacingAndGlyphs">膝パーツB v1</text></svg>
<svg style="left:175px;top:174px" width="14" height="14" viewBox="0 0 14 14"><circle cx="7" cy="7" r="6.2" fill="#fff" stroke="#222" stroke-width="1.1"/><circle cx="7" cy="7" r="2.5" fill="#222"/></svg>
<svg style="left:40px;top:199px" width="10" height="13" viewBox="0 0 10 13"><path d="M1 0.8L9 6.5 1 12.2z" fill="#f4f4f4" stroke="#222" stroke-width="1.2" stroke-linejoin="round"/></svg>
<div class="row" style="left:58px;top:195px;width:117px"></div>
<svg style="left:61px;top:197px" width="16" height="16" viewBox="0 0 16 16"><polygon points="15.79,6.18 15.79,9.82 13.2,10.32 13.32,10.04 14.8,12.22 12.22,14.8 10.04,13.32 10.32,13.2 9.82,15.79 6.18,15.79 5.68,13.2 5.96,13.32 3.78,14.8 1.2,12.22 2.68,10.04 2.8,10.32 0.21,9.82 0.21,6.18 2.8,5.68 2.68,5.96 1.2,3.78 3.78,1.2 5.96,2.68 5.68,2.8 6.18,0.21 9.82,0.21 10.32,2.8 10.04,2.68 12.22,1.2 14.8,3.78 13.32,5.96 13.2,5.68" fill="#9b9b9b"/><circle cx="8" cy="8" r="2.6" fill="#f1f1f1"/></svg>
<svg style="left:91.5px;top:197px" width="77" height="16"><text x="0" y="12" font-size="11" fill="#222" textLength="77" lengthAdjust="spacingAndGlyphs">ドキュメントの設定</text></svg>
<svg style="left:40px;top:223px" width="10" height="13" viewBox="0 0 10 13"><path d="M1 0.8L9 6.5 1 12.2z" fill="#f4f4f4" stroke="#222" stroke-width="1.2" stroke-linejoin="round"/></svg>
<div class="row" style="left:58px;top:219px;width:90px"></div>
<svg style="left:61px;top:223px" width="16" height="13" viewBox="0 0 16 13"><path d="M0 0.5h6.2l1.3 1.8H16V3.6H0z" fill="#9b9b9b"/><path d="M0 4.3h16V13H0z" fill="#9b9b9b"/></svg>
<svg style="left:90px;top:221px" width="45" height="16"><text x="0" y="12" font-size="11" fill="#222" textLength="45" lengthAdjust="spacingAndGlyphs">ビュー管理</text></svg>
<svg style="left:39px;top:248px" width="11" height="11" viewBox="0 0 11 11"><defs><linearGradient id="eg39_253" x1="0" y1="0" x2="1" y2="1"><stop offset="0.35" stop-color="#e8e8e8"/><stop offset="1" stop-color="#444"/></linearGradient></defs><path d="M10.5 0.8V10.5H0.8z" fill="url(#eg39_253)" stroke="#222" stroke-width="1" stroke-linejoin="round"/></svg>
<div class="row" style="left:58px;top:243px;width:90px"></div>
<svg style="left:61px;top:248px" width="16" height="10" viewBox="0 0 16 10"><path d="M0 5C3.2 0.3 12.8 0.3 16 5 12.8 9.7 3.2 9.7 0 5z" fill="#939393"/><circle cx="8" cy="5" r="3.1" fill="#f1f1f1"/><circle cx="8" cy="5" r="1.7" fill="#939393"/></svg>
<svg style="left:86px;top:247px" width="16" height="13" viewBox="0 0 16 13"><path d="M0 0.5h6.2l1.3 1.8H16V3.6H0z" fill="#9b9b9b"/><path d="M0 4.3h16V13H0z" fill="#9b9b9b"/></svg>
<svg style="left:116px;top:245px" width="20" height="16"><text x="0" y="12" font-size="11" fill="#222" textLength="20" lengthAdjust="spacingAndGlyphs">原点</text></svg>
<div class="row" style="left:76px;top:267px;width:75px"></div>
<svg style="left:79px;top:272px" width="16" height="10" viewBox="0 0 16 10"><path d="M0 5C3.2 0.3 12.8 0.3 16 5 12.8 9.7 3.2 9.7 0 5z" fill="#939393"/><circle cx="8" cy="5" r="3.1" fill="#f1f1f1"/><circle cx="8" cy="5" r="1.7" fill="#939393"/></svg>
<svg style="left:104px;top:269px" width="16" height="16" viewBox="0 0 16 16"><path d="M8 0v16M0 8h16" stroke="#e08a4a" stroke-width="1"/><path d="M8 2.3L13.7 8 8 13.7 2.3 8z" fill="#e08a4a"/><rect x="6.4" y="6.4" width="3.2" height="3.2" fill="#fff"/></svg>
<div class="lbl" style="left:134px;top:267px;font-size:11.5px;letter-spacing:0;color:#333">O</div>
<div class="row" style="left:76px;top:291px;width:75px"></div>
<svg style="left:79px;top:296px" width="16" height="10" viewBox="0 0 16 10"><path d="M0 5C3.2 0.3 12.8 0.3 16 5 12.8 9.7 3.2 9.7 0 5z" fill="#939393"/><circle cx="8" cy="5" r="3.1" fill="#f1f1f1"/><circle cx="8" cy="5" r="1.7" fill="#939393"/></svg>
<svg style="left:104px;top:293px" width="16" height="16" viewBox="0 0 16 16"><rect x="3.8" y="0.7" width="11.5" height="11.5" fill="#f6f6f6" stroke="#7b7b7b" stroke-width="1.2"/><path d="M0.7 15.3L9.8 6.2" stroke="#e39a66" stroke-width="1.3"/></svg>
<div class="lbl" style="left:134px;top:291px;font-size:11.5px;letter-spacing:0;color:#333">X</div>
<div class="row" style="left:76px;top:315px;width:75px"></div>
<svg style="left:79px;top:320px" width="16" height="10" viewBox="0 0 16 10"><path d="M0 5C3.2 0.3 12.8 0.3 16 5 12.8 9.7 3.2 9.7 0 5z" fill="#939393"/><circle cx="8" cy="5" r="3.1" fill="#f1f1f1"/><circle cx="8" cy="5" r="1.7" fill="#939393"/></svg>
<svg style="left:104px;top:317px" width="16" height="16" viewBox="0 0 16 16"><rect x="3.8" y="0.7" width="11.5" height="11.5" fill="#f6f6f6" stroke="#7b7b7b" stroke-width="1.2"/><path d="M0.7 15.3L9.8 6.2" stroke="#e39a66" stroke-width="1.3"/></svg>
<div class="lbl" style="left:134px;top:315px;font-size:11.5px;letter-spacing:0;color:#333">Y</div>
<div class="row" style="left:76px;top:339px;width:75px"></div>
<svg style="left:79px;top:344px" width="16" height="10" viewBox="0 0 16 10"><path d="M0 5C3.2 0.3 12.8 0.3 16 5 12.8 9.7 3.2 9.7 0 5z" fill="#939393"/><circle cx="8" cy="5" r="3.1" fill="#f1f1f1"/><circle cx="8" cy="5" r="1.7" fill="#939393"/></svg>
<svg style="left:104px;top:341px" width="16" height="16" viewBox="0 0 16 16"><rect x="3.8" y="0.7" width="11.5" height="11.5" fill="#f6f6f6" stroke="#7b7b7b" stroke-width="1.2"/><path d="M0.7 15.3L9.8 6.2" stroke="#e39a66" stroke-width="1.3"/></svg>
<div class="lbl" style="left:134px;top:339px;font-size:11.5px;letter-spacing:0;color:#333">Z</div>
<div class="row" style="left:76px;top:363px;width:83px"></div>
<svg style="left:79px;top:368px" width="16" height="10" viewBox="0 0 16 10"><path d="M0 5C3.2 0.3 12.8 0.3 16 5 12.8 9.7 3.2 9.7 0 5z" fill="#939393"/><circle cx="8" cy="5" r="3.1" fill="#f1f1f1"/><circle cx="8" cy="5" r="1.7" fill="#939393"/></svg>
<svg style="left:104px;top:365px" width="16" height="16" viewBox="0 0 16 16"><path d="M4.6 0.7h10.7v10.7h-3.8" fill="none" stroke="#333" stroke-width="1.1"/><rect x="0" y="4.6" width="11.5" height="11.4" fill="#e8945a"/><path d="M4.6 4.6v6.8h6.9" fill="none" stroke="#b86a34" stroke-width="1"/></svg>
<div class="lbl" style="left:134px;top:363px;font-size:11.5px;letter-spacing:0;color:#333">XY</div>
<div class="row" style="left:76px;top:387px;width:83px"></div>
<svg style="left:79px;top:392px" width="16" height="10" viewBox="0 0 16 10"><path d="M0 5C3.2 0.3 12.8 0.3 16 5 12.8 9.7 3.2 9.7 0 5z" fill="#939393"/><circle cx="8" cy="5" r="3.1" fill="#f1f1f1"/><circle cx="8" cy="5" r="1.7" fill="#939393"/></svg>
<svg style="left:104px;top:389px" width="16" height="16" viewBox="0 0 16 16"><path d="M4.6 0.7h10.7v10.7h-3.8" fill="none" stroke="#333" stroke-width="1.1"/><rect x="0" y="4.6" width="11.5" height="11.4" fill="#e8945a"/><path d="M4.6 4.6v6.8h6.9" fill="none" stroke="#b86a34" stroke-width="1"/></svg>
<div class="lbl" style="left:134px;top:387px;font-size:11.5px;letter-spacing:0;color:#333">XZ</div>
<div class="row" style="left:76px;top:411px;width:83px"></div>
<svg style="left:79px;top:416px" width="16" height="10" viewBox="0 0 16 10"><path d="M0 5C3.2 0.3 12.8 0.3 16 5 12.8 9.7 3.2 9.7 0 5z" fill="#939393"/><circle cx="8" cy="5" r="3.1" fill="#f1f1f1"/><circle cx="8" cy="5" r="1.7" fill="#939393"/></svg>
<svg style="left:104px;top:413px" width="16" height="16" viewBox="0 0 16 16"><path d="M4.6 0.7h10.7v10.7h-3.8" fill="none" stroke="#333" stroke-width="1.1"/><rect x="0" y="4.6" width="11.5" height="11.4" fill="#e8945a"/><path d="M4.6 4.6v6.8h6.9" fill="none" stroke="#b86a34" stroke-width="1"/></svg>
<div class="lbl" style="left:134px;top:411px;font-size:11.5px;letter-spacing:0;color:#333">YZ</div>
<svg style="left:40px;top:439px" width="10" height="13" viewBox="0 0 10 13"><path d="M1 0.8L9 6.5 1 12.2z" fill="#f4f4f4" stroke="#222" stroke-width="1.2" stroke-linejoin="round"/></svg>
<div class="row" style="left:58px;top:435px;width:90px"></div>
<svg style="left:61px;top:440px" width="16" height="10" viewBox="0 0 16 10"><path d="M0 5C3.2 0.3 12.8 0.3 16 5 12.8 9.7 3.2 9.7 0 5z" fill="#939393"/><circle cx="8" cy="5" r="3.1" fill="#f1f1f1"/><circle cx="8" cy="5" r="1.7" fill="#939393"/></svg>
<svg style="left:86px;top:439px" width="16" height="13" viewBox="0 0 16 13"><path d="M0 0.5h6.2l1.3 1.8H16V3.6H0z" fill="#9b9b9b"/><path d="M0 4.3h16V13H0z" fill="#9b9b9b"/></svg>
<svg style="left:116px;top:437px" width="23" height="16"><text x="0" y="12" font-size="11" fill="#222" textLength="23" lengthAdjust="spacingAndGlyphs">ボディ</text></svg>
<svg style="left:39px;top:464px" width="11" height="11" viewBox="0 0 11 11"><defs><linearGradient id="eg39_469" x1="0" y1="0" x2="1" y2="1"><stop offset="0.35" stop-color="#e8e8e8"/><stop offset="1" stop-color="#444"/></linearGradient></defs><path d="M10.5 0.8V10.5H0.8z" fill="url(#eg39_469)" stroke="#222" stroke-width="1" stroke-linejoin="round"/></svg>
<div class="row" style="left:58px;top:459px;width:99px"></div>
<svg style="left:61px;top:464px" width="16" height="10" viewBox="0 0 16 10"><path d="M0 5C3.2 0.3 12.8 0.3 16 5 12.8 9.7 3.2 9.7 0 5z" fill="#939393"/><circle cx="8" cy="5" r="3.1" fill="#f1f1f1"/><circle cx="8" cy="5" r="1.7" fill="#939393"/></svg>
<svg style="left:86px;top:463px" width="16" height="13" viewBox="0 0 16 13"><path d="M0 0.5h6.2l1.3 1.8H16V3.6H0z" fill="#9b9b9b"/><path d="M0 4.3h16V13H0z" fill="#9b9b9b"/></svg>
<svg style="left:116px;top:461px" width="30.5" height="16"><text x="0" y="12" font-size="11" fill="#222" textLength="30.5" lengthAdjust="spacingAndGlyphs">スケッチ</text></svg>
<div class="row" style="left:76px;top:483px;width:103px"></div>
<svg style="left:79px;top:488px" width="16" height="10" viewBox="0 0 16 10"><path d="M0 5C3.2 0.3 12.8 0.3 16 5 12.8 9.7 3.2 9.7 0 5z" fill="#dcdcdc"/><circle cx="8" cy="5" r="3.1" fill="#f1f1f1"/><circle cx="8" cy="5" r="1.7" fill="#dcdcdc"/><path d="M3 -0.5L13 10.5" stroke="#f1f1f1" stroke-width="2.4"/><path d="M3.8 -0.5L13.8 10.5" stroke="#dcdcdc" stroke-width="1"/></svg>
<svg style="left:104px;top:485px" width="17" height="17" viewBox="0 0 17 17"><path d="M1.5 1.5h11.5v11.5h-11.5z" fill="none" stroke="#555" stroke-width="0.9" stroke-dasharray="3.2 1.6"/><g fill="#1f86d6"><rect x="0.2" y="0.2" width="2.4" height="2.4"/><rect x="11.9" y="0.2" width="2.4" height="2.4"/><rect x="0.2" y="11.9" width="2.4" height="2.4"/></g><rect x="8.5" y="8.5" width="7" height="7" fill="#f1f1f1"/><path d="M8 15.6l0.9-2.9 5.4-5.4 2 2-5.4 5.4z" fill="#f6b73c"/><path d="M13.3 8.3l1-1 2 2-1 1z" fill="#e2433f"/><path d="M8 15.6l0.9-2.9 2 2z" fill="#555"/></svg>
<svg style="left:133.5px;top:485px" width="38" height="16"><text x="0" y="12" font-size="11" fill="#222" textLength="38" lengthAdjust="spacingAndGlyphs">スケッチ1</text></svg>
<div class="row" style="left:76px;top:507px;width:106px"></div>
<svg style="left:79px;top:512px" width="16" height="10" viewBox="0 0 16 10"><path d="M0 5C3.2 0.3 12.8 0.3 16 5 12.8 9.7 3.2 9.7 0 5z" fill="#dcdcdc"/><circle cx="8" cy="5" r="3.1" fill="#f1f1f1"/><circle cx="8" cy="5" r="1.7" fill="#dcdcdc"/><path d="M3 -0.5L13 10.5" stroke="#f1f1f1" stroke-width="2.4"/><path d="M3.8 -0.5L13.8 10.5" stroke="#dcdcdc" stroke-width="1"/></svg>
<svg style="left:104px;top:509px" width="17" height="17" viewBox="0 0 17 17"><path d="M1.5 1.5h11.5v11.5h-11.5z" fill="none" stroke="#555" stroke-width="0.9" stroke-dasharray="3.2 1.6"/><g fill="#1f86d6"><rect x="0.2" y="0.2" width="2.4" height="2.4"/><rect x="11.9" y="0.2" width="2.4" height="2.4"/><rect x="0.2" y="11.9" width="2.4" height="2.4"/></g><rect x="8.5" y="8.5" width="7" height="7" fill="#f1f1f1"/><path d="M8 15.6l0.9-2.9 5.4-5.4 2 2-5.4 5.4z" fill="#f6b73c"/><path d="M13.3 8.3l1-1 2 2-1 1z" fill="#e2433f"/><path d="M8 15.6l0.9-2.9 2 2z" fill="#555"/></svg>
<svg style="left:133.5px;top:509px" width="38" height="16"><text x="0" y="12" font-size="11" fill="#222" textLength="38" lengthAdjust="spacingAndGlyphs">スケッチ2</text></svg>
<div class="row" style="left:76px;top:531px;width:106px"></div>
<svg style="left:79px;top:536px" width="16" height="10" viewBox="0 0 16 10"><path d="M0 5C3.2 0.3 12.8 0.3 16 5 12.8 9.7 3.2 9.7 0 5z" fill="#dcdcdc"/><circle cx="8" cy="5" r="3.1" fill="#f1f1f1"/><circle cx="8" cy="5" r="1.7" fill="#dcdcdc"/><path d="M3 -0.5L13 10.5" stroke="#f1f1f1" stroke-width="2.4"/><path d="M3.8 -0.5L13.8 10.5" stroke="#dcdcdc" stroke-width="1"/></svg>
<svg style="left:104px;top:533px" width="17" height="17" viewBox="0 0 17 17"><path d="M1.5 1.5h11.5v11.5h-11.5z" fill="none" stroke="#555" stroke-width="0.9" stroke-dasharray="3.2 1.6"/><g fill="#1f86d6"><rect x="0.2" y="0.2" width="2.4" height="2.4"/><rect x="11.9" y="0.2" width="2.4" height="2.4"/><rect x="0.2" y="11.9" width="2.4" height="2.4"/></g><rect x="8.5" y="8.5" width="7" height="7" fill="#f1f1f1"/><path d="M8 15.6l0.9-2.9 5.4-5.4 2 2-5.4 5.4z" fill="#f6b73c"/><path d="M13.3 8.3l1-1 2 2-1 1z" fill="#e2433f"/><path d="M8 15.6l0.9-2.9 2 2z" fill="#555"/></svg>
<svg style="left:133.5px;top:533px" width="38" height="16"><text x="0" y="12" font-size="11" fill="#222" textLength="38" lengthAdjust="spacingAndGlyphs">スケッチ3</text></svg>
<div class="row" style="left:76px;top:555px;width:106px"></div>
<svg style="left:79px;top:560px" width="16" height="10" viewBox="0 0 16 10"><path d="M0 5C3.2 0.3 12.8 0.3 16 5 12.8 9.7 3.2 9.7 0 5z" fill="#dcdcdc"/><circle cx="8" cy="5" r="3.1" fill="#f1f1f1"/><circle cx="8" cy="5" r="1.7" fill="#dcdcdc"/><path d="M3 -0.5L13 10.5" stroke="#f1f1f1" stroke-width="2.4"/><path d="M3.8 -0.5L13.8 10.5" stroke="#dcdcdc" stroke-width="1"/></svg>
<svg style="left:104px;top:557px" width="17" height="17" viewBox="0 0 17 17"><path d="M1.5 1.5h11.5v11.5h-11.5z" fill="none" stroke="#555" stroke-width="0.9" stroke-dasharray="3.2 1.6"/><g fill="#1f86d6"><rect x="0.2" y="0.2" width="2.4" height="2.4"/><rect x="11.9" y="0.2" width="2.4" height="2.4"/><rect x="0.2" y="11.9" width="2.4" height="2.4"/></g><rect x="8.5" y="8.5" width="7" height="7" fill="#f1f1f1"/><path d="M8 15.6l0.9-2.9 5.4-5.4 2 2-5.4 5.4z" fill="#f6b73c"/><path d="M13.3 8.3l1-1 2 2-1 1z" fill="#e2433f"/><path d="M8 15.6l0.9-2.9 2 2z" fill="#555"/></svg>
<svg style="left:133.5px;top:557px" width="38" height="16"><text x="0" y="12" font-size="11" fill="#222" textLength="38" lengthAdjust="spacingAndGlyphs">スケッチ4</text></svg>
<div class="row" style="left:76px;top:579px;width:106px"></div>
<svg style="left:79px;top:584px" width="16" height="10" viewBox="0 0 16 10"><path d="M0 5C3.2 0.3 12.8 0.3 16 5 12.8 9.7 3.2 9.7 0 5z" fill="#dcdcdc"/><circle cx="8" cy="5" r="3.1" fill="#f1f1f1"/><circle cx="8" cy="5" r="1.7" fill="#dcdcdc"/><path d="M3 -0.5L13 10.5" stroke="#f1f1f1" stroke-width="2.4"/><path d="M3.8 -0.5L13.8 10.5" stroke="#dcdcdc" stroke-width="1"/></svg>
<svg style="left:104px;top:581px" width="17" height="17" viewBox="0 0 17 17"><path d="M1.5 1.5h11.5v11.5h-11.5z" fill="none" stroke="#555" stroke-width="0.9" stroke-dasharray="3.2 1.6"/><g fill="#3a3a3a"><rect x="0.2" y="0.2" width="2.4" height="2.4"/><rect x="11.9" y="0.2" width="2.4" height="2.4"/><rect x="0.2" y="11.9" width="2.4" height="2.4"/></g><rect x="9" y="8.5" width="8" height="8" fill="#f1f1f1"/><path d="M11.2 10.4V8.9a1.9 1.9 0 0 1 3.8 0V10.4" fill="none" stroke="#c0303c" stroke-width="1.1"/><rect x="9.9" y="10.3" width="6.3" height="5.2" fill="#ea5a66" stroke="#c0303c" stroke-width="0.8"/></svg>
<svg style="left:133.5px;top:581px" width="38" height="16"><text x="0" y="12" font-size="11" fill="#222" textLength="38" lengthAdjust="spacingAndGlyphs">スケッチ5</text></svg>
<div class="row" style="left:76px;top:603px;width:106px"></div>
<svg style="left:79px;top:608px" width="16" height="10" viewBox="0 0 16 10"><path d="M0 5C3.2 0.3 12.8 0.3 16 5 12.8 9.7 3.2 9.7 0 5z" fill="#dcdcdc"/><circle cx="8" cy="5" r="3.1" fill="#f1f1f1"/><circle cx="8" cy="5" r="1.7" fill="#dcdcdc"/><path d="M3 -0.5L13 10.5" stroke="#f1f1f1" stroke-width="2.4"/><path d="M3.8 -0.5L13.8 10.5" stroke="#dcdcdc" stroke-width="1"/></svg>
<svg style="left:104px;top:605px" width="17" height="17" viewBox="0 0 17 17"><path d="M1.5 1.5h11.5v11.5h-11.5z" fill="none" stroke="#555" stroke-width="0.9" stroke-dasharray="3.2 1.6"/><g fill="#3a3a3a"><rect x="0.2" y="0.2" width="2.4" height="2.4"/><rect x="11.9" y="0.2" width="2.4" height="2.4"/><rect x="0.2" y="11.9" width="2.4" height="2.4"/></g><rect x="9" y="8.5" width="8" height="8" fill="#f1f1f1"/><path d="M11.2 10.4V8.9a1.9 1.9 0 0 1 3.8 0V10.4" fill="none" stroke="#c0303c" stroke-width="1.1"/><rect x="9.9" y="10.3" width="6.3" height="5.2" fill="#ea5a66" stroke="#c0303c" stroke-width="0.8"/></svg>
<svg style="left:133.5px;top:605px" width="38" height="16"><text x="0" y="12" font-size="11" fill="#222" textLength="38" lengthAdjust="spacingAndGlyphs">スケッチ6</text></svg>
<svg style="left:40px;top:631px" width="10" height="13" viewBox="0 0 10 13"><path d="M1 0.8L9 6.5 1 12.2z" fill="#f4f4f4" stroke="#222" stroke-width="1.2" stroke-linejoin="round"/></svg>
<div class="row" style="left:58px;top:627px;width:138px"></div>
<svg style="left:61px;top:632px" width="16" height="10" viewBox="0 0 16 10"><path d="M0 5C3.2 0.3 12.8 0.3 16 5 12.8 9.7 3.2 9.7 0 5z" fill="#939393"/><circle cx="8" cy="5" r="3.1" fill="#f1f1f1"/><circle cx="8" cy="5" r="1.7" fill="#939393"/></svg>
<svg style="left:86px;top:631px" width="16" height="13" viewBox="0 0 16 13"><path d="M0 0.5h6.2l1.3 1.8H16V3.6H0z" fill="#9b9b9b"/><path d="M0 4.3h16V13H0z" fill="#9b9b9b"/></svg>
<svg style="left:115px;top:629px" width="71" height="16"><text x="0" y="12" font-size="11" fill="#222" textLength="71" lengthAdjust="spacingAndGlyphs">コンストラクション</text></svg>
<div class="a" style="left:4px;top:960px;width:300px;height:26px;background:#f1f1f1;border:1px solid #cdcdcd"></div>
<svg style="left:29px;top:964.5px" width="30" height="16"><text x="0" y="12" font-size="11" fill="#444" textLength="30" lengthAdjust="spacingAndGlyphs">コメント</text></svg>
<svg style="left:282px;top:968px" width="10" height="10" viewBox="0 0 10 10"><circle cx="5" cy="5" r="4.8" fill="#1c1c1c"/><rect x="2" y="4.3" width="6" height="1.4" fill="#f1f1f1"/><rect x="4.3" y="2" width="1.4" height="6" fill="#f1f1f1"/></svg>
<div class="a" style="left:299px;top:967px;width:1px;height:11px;background:#555"></div><div class="a" style="left:301px;top:968px;width:1px;height:9px;background:#aaa"></div>
<div class="t" style="left:1816px;top:154px;font-size:13px;line-height:14px;color:#5452d8;font-weight:bold">Z</div>
<div class="t" style="left:1873px;top:228px;font-size:12px;line-height:14px;color:#ea6f6f;font-weight:bold">X</div>
<div class="a" style="left:833px;top:961px;width:252px;height:26px;background:rgba(240,240,240,.9)"></div>
<svg style="left:836px;top:965px" width="17" height="18" viewBox="0 0 17 18" fill="none" stroke="#2b2b2b"><path d="M8.5 4v13M7 4h3M6.2 4.5l2.3-3.5 2.3 3.5" stroke-width="1.1" fill="#fff"/><path d="M6.5 7C2 7.8 0.3 9.5 1.2 11c1.2 2 9 2.3 13 0.5 2.5-1.2 2.5-3 0-4-1-0.4-2-0.6-3.2-0.7" stroke-width="1.4"/><path d="M5 13.5l-3.5-2.3 0.5 4z" fill="#2b2b2b" stroke-width="0.8"/></svg>
<div class="dd" style="left:857px;top:972px"></div>
<svg style="left:868px;top:966px" width="18" height="16" viewBox="0 0 18 16" fill="none" stroke="#2b2b2b"><path d="M1 6.5h16v9H1z" stroke-width="1.3" fill="#f4f4f4"/><rect x="4" y="9" width="10" height="4" fill="#b8b8b8" stroke-width="1"/><path d="M2 6.5l5.5-4.8 1.3 2.2 5-1.8 0.5 4.4" stroke-width="1.1" fill="#d8d8d8"/></svg>
<svg style="left:895px;top:965px" width="17" height="18" viewBox="0 0 17 18" fill="#fff" stroke="#2b2b2b" stroke-width="1.1" stroke-linejoin="round"><path d="M4.3 10.5V4.2c0-1.5 2-1.5 2 0V8.5 2.5c0-1.5 2.1-1.5 2.1 0V8.2 3c0-1.5 2.1-1.5 2.1 0v5.5V5c0-1.5 2-1.5 2 0v7c0 3-1.5 5.3-4.5 5.3-3 0-4.2-1.3-5.4-3.6L0.8 10.2c-0.5-1.3 1-2 1.8-1z"/></svg>
<svg style="left:920px;top:965px" width="19" height="18" viewBox="0 0 19 18" fill="none" stroke="#2b2b2b"><circle cx="6.5" cy="8.5" r="5" stroke-width="1.5" fill="#eef3f8"/><path d="M10.2 12.2l4.3 4.5" stroke-width="2.6" stroke-linecap="round"/><path d="M12.5 3h5M15 0.5v5M12.5 7.8h5" stroke-width="1.1"/></svg>
<svg style="left:946px;top:965px" width="18" height="18" viewBox="0 0 18 18" fill="none" stroke="#2b2b2b"><circle cx="7" cy="7" r="6" stroke-width="1.5" fill="#f4f4f4"/><rect x="3.8" y="3.8" width="6.4" height="6.4" stroke-width="1.1" fill="#d6d6d6"/><path d="M11.5 11.5l4.8 4.8" stroke-width="2.6" stroke-linecap="round"/></svg>
<div class="dd" style="left:968px;top:972px"></div>
<svg style="left:988px;top:966px" width="17" height="16" viewBox="0 0 17 16"><rect x="0.6" y="0.6" width="15.4" height="11.3" fill="#e8e8e8" stroke="#444" stroke-width="1.2"/><rect x="2.6" y="2.5" width="11.4" height="7.5" fill="#9db7dd" stroke="#4b6ea8" stroke-width="0.8"/><path d="M6.5 12v2h4v-2M4 15h9" stroke="#555" stroke-width="1.2" fill="none"/></svg>
<div class="dd" style="left:1007px;top:972px"></div>
<svg style="left:1019px;top:966px" width="16" height="16" viewBox="0 0 16 16"><rect x="0.5" y="0.5" width="15" height="15" fill="#f8f8f8" stroke="#333" stroke-width="1"/><path d="M3.5 0.5v15M0.5 3.5h15" stroke="#4a4a55" stroke-width="0.7"/><path d="M6.5 0.5v15M0.5 6.5h15" stroke="#4a4a55" stroke-width="0.7"/><path d="M9.5 0.5v15M0.5 9.5h15" stroke="#4a4a55" stroke-width="0.7"/><path d="M12.5 0.5v15M0.5 12.5h15" stroke="#4a4a55" stroke-width="0.7"/><rect x="0.5" y="9.5" width="15" height="6" fill="#3a3a5a" fill-opacity="0.25"/></svg>
<div class="dd" style="left:1038px;top:972px"></div>
<svg style="left:1050px;top:967px" width="16" height="14" viewBox="0 0 16 14"><rect x="0.6" y="0.6" width="14.8" height="12.8" fill="#c6d5ea" stroke="#3d5f96" stroke-width="1.2"/><path d="M8 0.6v12.8M0.6 7h14.8" stroke="#3d5f96" stroke-width="1.2"/><g fill="#8ea9d2"><rect x="2.2" y="2.2" width="4.3" height="3.3"/><rect x="9.5" y="2.2" width="4.3" height="3.3"/><rect x="2.2" y="8.5" width="4.3" height="3.3"/><rect x="9.5" y="8.5" width="4.3" height="3.3"/></g></svg>
<div class="dd" style="left:1068px;top:972px"></div>
<div id="timeline" class="a"></div>
<svg style="left:11px;top:1009px" width="113" height="15" viewBox="0 0 113 15" fill="#454545"><rect x="0" y="0" width="2.3" height="14.5"/><path d="M12.5 0.5v13.5L2.8 7.3z"/><path d="M33.5 1.5v11.5L24.5 7.3z"/><rect x="34.5" y="3.8" width="2.3" height="7"/><path d="M50.5 0v14.8L61.8 7.4z"/><rect x="74" y="3.8" width="2.3" height="7"/><path d="M77.3 1.5v11.5l9-5.7z"/><path d="M100 0.5v13.5l9.7-6.7z"/><rect x="110.2" y="0" width="2.3" height="14.5"/></svg>
<svg style="left:146px;top:1007px" width="17" height="17" viewBox="0 0 17 17"><path d="M1.5 1.5h11.5v11.5h-11.5z" fill="none" stroke="#555" stroke-width="0.9" stroke-dasharray="3.2 1.6"/><g fill="#1f86d6"><rect x="0.2" y="0.2" width="2.4" height="2.4"/><rect x="11.9" y="0.2" width="2.4" height="2.4"/><rect x="0.2" y="11.9" width="2.4" height="2.4"/></g><rect x="8.5" y="8.5" width="7" height="7" fill="#f1f1f1"/><path d="M8 15.6l0.9-2.9 5.4-5.4 2 2-5.4 5.4z" fill="#f6b73c"/><path d="M13.3 8.3l1-1 2 2-1 1z" fill="#e2433f"/><path d="M8 15.6l0.9-2.9 2 2z" fill="#555"/></svg>
<svg style="left:170px;top:1007px" width="17" height="16" viewBox="0 0 17 16"><path d="M0.6 5.5L4 1h3.5L4.5 5.5z" fill="#f4f4f4" stroke="#666" stroke-width="0.9"/><path d="M0.6 5.5h3.9v10H0.6z" fill="#dadada" stroke="#666" stroke-width="0.9"/><path d="M5.2 5.5L9.5 0.8v9.7L5.2 15.5z" fill="#5bbd7b"/><path d="M11.5 5.5L15.8 0.8v9.5L11.5 15z" fill="#e8945a"/></svg>
<svg style="left:194px;top:1007px" width="17" height="17" viewBox="0 0 17 17"><path d="M1.5 1.5h11.5v11.5h-11.5z" fill="none" stroke="#555" stroke-width="0.9" stroke-dasharray="3.2 1.6"/><g fill="#1f86d6"><rect x="0.2" y="0.2" width="2.4" height="2.4"/><rect x="11.9" y="0.2" width="2.4" height="2.4"/><rect x="0.2" y="11.9" width="2.4" height="2.4"/></g><rect x="8.5" y="8.5" width="7" height="7" fill="#f1f1f1"/><path d="M8 15.6l0.9-2.9 5.4-5.4 2 2-5.4 5.4z" fill="#f6b73c"/><path d="M13.3 8.3l1-1 2 2-1 1z" fill="#e2433f"/><path d="M8 15.6l0.9-2.9 2 2z" fill="#555"/></svg>
<svg style="left:218px;top:1007px" width="17" height="16" viewBox="0 0 17 16"><path d="M0.5 0.8h15.5v8.7l-4 4H4.5l-4-4z" fill="#4a94d3"/><path d="M0.5 0.8h15.5L12 8.5H4.5z" fill="#8fc8f4"/><circle cx="8.2" cy="12" r="3.3" fill="#fff" stroke="#333" stroke-width="1.1"/></svg>
<svg style="left:242px;top:1007px" width="17" height="16" viewBox="0 0 17 16"><path d="M0.8 13.5V7L5 2h5l-4 5v6.5z" fill="#e0e0e0" stroke="#666" stroke-width="0.9"/><path d="M5.5 7.5L9.8 1.5l4.2 1.3 1 9z" fill="#4a94d3"/><path d="M5.5 7.5L9.8 1.5l2 8.5-1.5 3z" fill="#7cbdf0"/><path d="M12.5 1l3 6.5" stroke="#222" stroke-width="1.1"/></svg>
<svg style="left:266px;top:1007px" width="17" height="17" viewBox="0 0 17 17"><path d="M1.5 1.5h11.5v11.5h-11.5z" fill="none" stroke="#555" stroke-width="0.9" stroke-dasharray="3.2 1.6"/><g fill="#1f86d6"><rect x="0.2" y="0.2" width="2.4" height="2.4"/><rect x="11.9" y="0.2" width="2.4" height="2.4"/><rect x="0.2" y="11.9" width="2.4" height="2.4"/></g><rect x="8.5" y="8.5" width="7" height="7" fill="#f1f1f1"/><path d="M8 15.6l0.9-2.9 5.4-5.4 2 2-5.4 5.4z" fill="#f6b73c"/><path d="M13.3 8.3l1-1 2 2-1 1z" fill="#e2433f"/><path d="M8 15.6l0.9-2.9 2 2z" fill="#555"/></svg>
<svg style="left:290px;top:1007px" width="17" height="16" viewBox="0 0 17 16"><path d="M0.5 12.5h9.5l2.5-2.5v2.6l-2.5 2.9H0.5z" fill="#c9c9c9"/><path d="M1 3.5h9v8.7H1z" fill="#6db4e9"/><path d="M1 3.5L3.5 0.7h9L10 3.5z" fill="#93cbf5"/><path d="M10 3.5l2.5-2.8v8.7L10 12.2z" fill="#4a94d3"/><path d="M14.8 2.5v11" stroke="#222" stroke-width="1.2"/><path d="M14.8 0.5l1.9 3.2h-3.8z" fill="#222"/></svg>
<svg style="left:314px;top:1007px" width="17" height="16" viewBox="0 0 17 16"><path d="M0.8 8.5L8 0.8h3.5c3 0 4.7 2 4.7 4.5V15.3H0.8z" fill="#dedede" stroke="#666" stroke-width="1"/><path d="M2 7.2L7.8 1.3l4.7 2.5L6.5 10z" fill="#5aa7e4"/></svg>
<svg style="left:338px;top:1007px" width="17" height="17" viewBox="0 0 17 17"><path d="M1.5 1.5h11.5v11.5h-11.5z" fill="none" stroke="#555" stroke-width="0.9" stroke-dasharray="3.2 1.6"/><g fill="#1f86d6"><rect x="0.2" y="0.2" width="2.4" height="2.4"/><rect x="11.9" y="0.2" width="2.4" height="2.4"/><rect x="0.2" y="11.9" width="2.4" height="2.4"/></g><rect x="8.5" y="8.5" width="7" height="7" fill="#f1f1f1"/><path d="M8 15.6l0.9-2.9 5.4-5.4 2 2-5.4 5.4z" fill="#f6b73c"/><path d="M13.3 8.3l1-1 2 2-1 1z" fill="#e2433f"/><path d="M8 15.6l0.9-2.9 2 2z" fill="#555"/></svg>
<svg style="left:362px;top:1007px" width="17" height="16" viewBox="0 0 17 16"><path d="M0.5 12.5h9.5l2.5-2.5v2.6l-2.5 2.9H0.5z" fill="#c9c9c9"/><path d="M1 3.5h9v8.7H1z" fill="#6db4e9"/><path d="M1 3.5L3.5 0.7h9L10 3.5z" fill="#93cbf5"/><path d="M10 3.5l2.5-2.8v8.7L10 12.2z" fill="#4a94d3"/><path d="M14.8 2.5v11" stroke="#222" stroke-width="1.2"/><path d="M14.8 0.5l1.9 3.2h-3.8z" fill="#222"/></svg>
<svg style="left:386px;top:1007px" width="17" height="17" viewBox="0 0 17 17"><path d="M1.5 1.5h11.5v11.5h-11.5z" fill="none" stroke="#555" stroke-width="0.9" stroke-dasharray="3.2 1.6"/><g fill="#1f86d6"><rect x="0.2" y="0.2" width="2.4" height="2.4"/><rect x="11.9" y="0.2" width="2.4" height="2.4"/><rect x="0.2" y="11.9" width="2.4" height="2.4"/></g><rect x="8.5" y="8.5" width="7" height="7" fill="#f1f1f1"/><path d="M8 15.6l0.9-2.9 5.4-5.4 2 2-5.4 5.4z" fill="#f6b73c"/><path d="M13.3 8.3l1-1 2 2-1 1z" fill="#e2433f"/><path d="M8 15.6l0.9-2.9 2 2z" fill="#555"/></svg>
<svg style="left:410px;top:1007px" width="17" height="17" viewBox="0 0 17 17"><path d="M1.5 1.5h11.5v11.5h-11.5z" fill="none" stroke="#555" stroke-width="0.9" stroke-dasharray="3.2 1.6"/><g fill="#1f86d6"><rect x="0.2" y="0.2" width="2.4" height="2.4"/><rect x="11.9" y="0.2" width="2.4" height="2.4"/><rect x="0.2" y="11.9" width="2.4" height="2.4"/></g><rect x="8.5" y="8.5" width="7" height="7" fill="#f1f1f1"/><path d="M8 15.6l0.9-2.9 5.4-5.4 2 2-5.4 5.4z" fill="#f6b73c"/><path d="M13.3 8.3l1-1 2 2-1 1z" fill="#e2433f"/><path d="M8 15.6l0.9-2.9 2 2z" fill="#555"/></svg>
<svg style="left:434px;top:1007px" width="17" height="16" viewBox="0 0 17 16"><path d="M0.5 12.5h9.5l2.5-2.5v2.6l-2.5 2.9H0.5z" fill="#c9c9c9"/><path d="M1 3.5h9v8.7H1z" fill="#6db4e9"/><path d="M1 3.5L3.5 0.7h9L10 3.5z" fill="#93cbf5"/><path d="M10 3.5l2.5-2.8v8.7L10 12.2z" fill="#4a94d3"/><path d="M14.8 2.5v11" stroke="#222" stroke-width="1.2"/><path d="M14.8 0.5l1.9 3.2h-3.8z" fill="#222"/></svg>
<svg style="left:458px;top:1007px" width="17" height="16" viewBox="0 0 17 16"><path d="M0.5 12.5h9.5l2.5-2.5v2.6l-2.5 2.9H0.5z" fill="#c9c9c9"/><path d="M1 3.5h9v8.7H1z" fill="#6db4e9"/><path d="M1 3.5L3.5 0.7h9L10 3.5z" fill="#93cbf5"/><path d="M10 3.5l2.5-2.8v8.7L10 12.2z" fill="#4a94d3"/><path d="M14.8 2.5v11" stroke="#222" stroke-width="1.2"/><path d="M14.8 0.5l1.9 3.2h-3.8z" fill="#222"/></svg>
<svg style="left:154px;top:1026px" width="314" height="7" viewBox="0 0 314 7" fill="#cacaca"><rect x="0" y="5" width="313.5" height="2"/><rect x="0" y="0" width="1.7" height="6"/><rect x="24" y="0" width="1.7" height="6"/><rect x="48" y="0" width="1.7" height="6"/><rect x="72" y="0" width="1.7" height="6"/><rect x="96" y="0" width="1.7" height="6"/><rect x="120" y="0" width="1.7" height="6"/><rect x="144" y="0" width="1.7" height="6"/><rect x="168" y="0" width="1.7" height="6"/><rect x="192" y="0" width="1.7" height="6"/><rect x="216" y="0" width="1.7" height="6"/><rect x="240" y="0" width="1.7" height="6"/><rect x="264" y="0" width="1.7" height="6"/><rect x="288" y="0" width="1.7" height="6"/><rect x="312" y="0" width="1.7" height="6"/></svg>
<svg style="left:471px;top:1001px" width="14" height="32" viewBox="0 0 14 32" fill="#555"><path d="M0.5 0h13v2L8 7.5V32H6.2V7.5L0.5 2z"/></svg>
<svg style="left:1891px;top:1008px" width="16" height="16" viewBox="0 0 16 16"><polygon points="15.79,6.18 15.79,9.82 13.2,10.32 13.32,10.04 14.8,12.22 12.22,14.8 10.04,13.32 10.32,13.2 9.82,15.79 6.18,15.79 5.68,13.2 5.96,13.32 3.78,14.8 1.2,12.22 2.68,10.04 2.8,10.32 0.21,9.82 0.21,6.18 2.8,5.68 2.68,5.96 1.2,3.78 3.78,1.2 5.96,2.68 5.68,2.8 6.18,0.21 9.82,0.21 10.32,2.8 10.04,2.68 12.22,1.2 14.8,3.78 13.32,5.96 13.2,5.68" fill="#8c8c8c"/><circle cx="8" cy="8" r="2.6" fill="#f1f1f1"/></svg>
<div id="taskbar" class="a"></div>
<svg style="left:16px;top:1052px" width="17" height="17" viewBox="0 0 17 17" fill="#fff"><path d="M0 2.3L7 1.3V8H0z M8 1.2L17 0v8H8z M0 9h7v6.8L0 14.8z M8 9h9v8L8 15.9z"/></svg>
<div class="a" style="left:48px;top:1040px;width:344px;height:40px;background:#f2f2f2;border-top:1px solid #d3d3d3"></div>
<svg style="left:60px;top:1052px" width="17" height="17" viewBox="0 0 17 17" fill="none" stroke="#222" stroke-width="1.4"><circle cx="10.5" cy="6.3" r="5.3"/><path d="M6.8 10.2L0.7 16.3"/></svg>
<svg style="left:88.5px;top:1050.5px" width="112" height="20"><text x="0" y="15.4" font-size="15" fill="#444" textLength="112" lengthAdjust="spacingAndGlyphs">ここに入力して検索</text></svg>
<svg style="left:407px;top:1051px" width="18" height="18" viewBox="0 0 18 18"><circle cx="9" cy="8.6" r="6.6" fill="none" stroke="#fff" stroke-width="1.8"/></svg>
<svg style="left:455px;top:1052px" width="18" height="16" viewBox="0 0 18 16" fill="none" stroke="#fff" stroke-width="1.3"><rect x="2.2" y="4.2" width="9.3" height="7.6"/><path d="M0.6 1.2h12.5M0.6 14.8h12.5M16 0v5M16 7.5v2.5M16 12v4"/></svg>
<svg style="left:503px;top:1050px" width="24" height="20" viewBox="0 0 24 20"><path d="M1 2.5c0-0.8 0.5-1.3 1.3-1.3H8l2 2.3h11.5c0.8 0 1.3 0.5 1.3 1.3V18H1z" fill="#f4b940"/><path d="M1 6.5h21.8V18.8H1z" fill="#fbd768"/><path d="M6.5 11.5h11V19h-3.2v-3.7H9.7V19H6.5z" fill="#3f8fdc"/></svg>
<svg style="left:552px;top:1048px" width="24" height="24" viewBox="0 0 24 24"><circle cx="12" cy="12" r="11.5" fill="#de4a3c"/><path d="M12 12L2.04 17.75A11.5 11.5 0 0 0 12 23.5L17.75 13.54z" fill="#2ba050"/><path d="M2.04 17.75A11.5 11.5 0 0 1 2.04 6.25L12 12z" fill="#2ba050"/><path d="M12 23.5A11.5 11.5 0 0 0 21.96 6.25H12l5.75 7.29z" fill="#fccc3d"/><path d="M12 12l5 3-5 8.5z" fill="#fccc3d"/><circle cx="12" cy="12" r="5.3" fill="#fff"/><circle cx="12" cy="12" r="4.2" fill="#4c8bf5"/></svg>
<div class="a" style="left:601px;top:1048px;width:24px;height:24px;background:linear-gradient(90deg,#e0122a 0,#e0122a 8%,#1a1ad8 14%,#0d0d90 45%,#000 85%);border:1px solid #000"></div>
<div class="t" style="left:601px;top:1052px;width:24px;text-align:center;font-family:'Liberation Serif',serif;font-size:15px;line-height:16px;color:#fff;letter-spacing:-.5px">ViX</div>
<svg style="left:651px;top:1049px" width="24" height="22" viewBox="0 0 24 22"><path d="M1 14.5L15.5 4l5 7L6 21.5z" fill="#2d57c8" stroke="#17348f" stroke-width="0.8"/><path d="M4.5 14.8L15 7.3l2.2 3.1L6.7 18z" fill="#f4f6fb"/><path d="M6.5 15l8-5.7" stroke="#333" stroke-width="1.1"/><path d="M18 6.5L22.5 1" stroke="#4a74e0" stroke-width="1.6"/></svg>
<div class="a" style="left:687px;top:1040px;width:48px;height:40px;background:#40525f"></div>
<div class="a" style="left:687px;top:1077px;width:48px;height:3px;background:#76b9ed"></div>
<svg style="left:699px;top:1048px" width="24" height="24" viewBox="0 0 24 24"><rect width="24" height="24" rx="1.5" fill="#f6dcc4"/><path d="M6.3 20V4.2c0-0.6 0.4-1 1-1H18v3.6h-7.2v3.3h5.7v3.5h-5.7V20z" fill="#ea8a22"/><path d="M6.3 20V4.2c0-0.6 0.4-1 1-1h2V20z" fill="#d06f12"/><text x="14.5" y="21" font-size="4.5" font-family="Liberation Sans" fill="#ea8a22" font-weight="bold">360</text></svg>
<svg style="left:1649px;top:1056px" width="13" height="8" viewBox="0 0 13 8" fill="none" stroke="#fff" stroke-width="1.3"><path d="M0.5 7.3l6-6 6 6"/></svg>
<svg style="left:1670px;top:1053px" width="18" height="15" viewBox="0 0 18 15" fill="none" stroke="#fff" stroke-width="1.1"><rect x="4.5" y="1" width="12.5" height="8.5"/><path d="M10.7 9.5v3.5M7 13.3h7.5"/><rect x="0.6" y="0.6" width="4.5" height="4" fill="#1c2b49"/><path d="M2.8 4.6v7.2h3"/><path d="M1.5 2h2.7" stroke-width="0.8"/></svg>
<svg style="left:1695px;top:1054px" width="17" height="11" viewBox="0 0 17 11"><path d="M3.8 10.8a3.6 3.6 0 0 1-0.3-7.2 5 5 0 0 1 9.3-0.3 3.8 3.8 0 0 1 0.4 7.5z" fill="#fff"/><path d="M6.5 10.8l7.5-5.5a3.8 3.8 0 0 1-0.8 5.5z" fill="#c9d3e2"/></svg>
<svg style="left:1718px;top:1053px" width="18" height="15" viewBox="0 0 18 15" fill="none" stroke="#fff" stroke-width="1.1"><path d="M0.6 5h3l4-3.8v12.6L3.6 10h-3z"/><path d="M9.5 5.3c1 1.2 1 3.2 0 4.4M11.5 3.6c2 2.2 2 5.6 0 7.8"/><path d="M13.5 2c2.8 3 2.8 8 0 11" stroke-opacity="0.8"/><path d="M15.6 0.5c3 4 3 10 0 14" stroke-opacity="0.35"/></svg>
<svg style="left:1742px;top:1052px" width="16" height="16" viewBox="0 0 16 16"><circle cx="8" cy="8" r="7.4" fill="#9a9eaa"/><path d="M4.8 4.8l6.4 6.4M11.2 4.8l-6.4 6.4" stroke="#1f2c47" stroke-width="2"/></svg>
<svg style="left:1771px;top:1052px" width="16" height="16" viewBox="0 0 16 16"><rect width="15.5" height="15.5" fill="#fff"/><circle cx="7.8" cy="7.8" r="6.6" fill="#151515"/><path d="M9.2 3.3v6.3c0 1.7-1.5 2.5-3.2 1.8" stroke="#fff" stroke-width="1.5" fill="none"/></svg>
<div class="t" style="left:1802px;top:1045px;width:58px;text-align:center;font-size:12px;line-height:14px;color:#fff;letter-spacing:-.6px">2:38</div>
<div class="t" style="left:1801px;top:1062.5px;width:62px;text-align:center;font-size:12px;line-height:14px;color:#fff;letter-spacing:-.2px">2020/06/02</div>
<svg style="left:1878px;top:1051px" width="26" height="26" viewBox="0 0 26 26"><path d="M0.6 0.6h16v12h-8.8L4.6 15.8V12.6h-4z" fill="#fff"/><path d="M3.3 3.8h10.6M3.3 6.4h10.6M3.3 9h10.6" stroke="#1c2b49" stroke-width="1"/><circle cx="16.2" cy="16.5" r="7.6" fill="#252b3a" stroke="#8b909c" stroke-width="1"/><path d="M14.3 14.3l2.4-1.8v8.2" stroke="#fff" stroke-width="1.5" fill="none"/></svg>
<div class="a" style="left:1915px;top:1040px;width:1px;height:40px;background:#6e7686"></div>
</body></html>
